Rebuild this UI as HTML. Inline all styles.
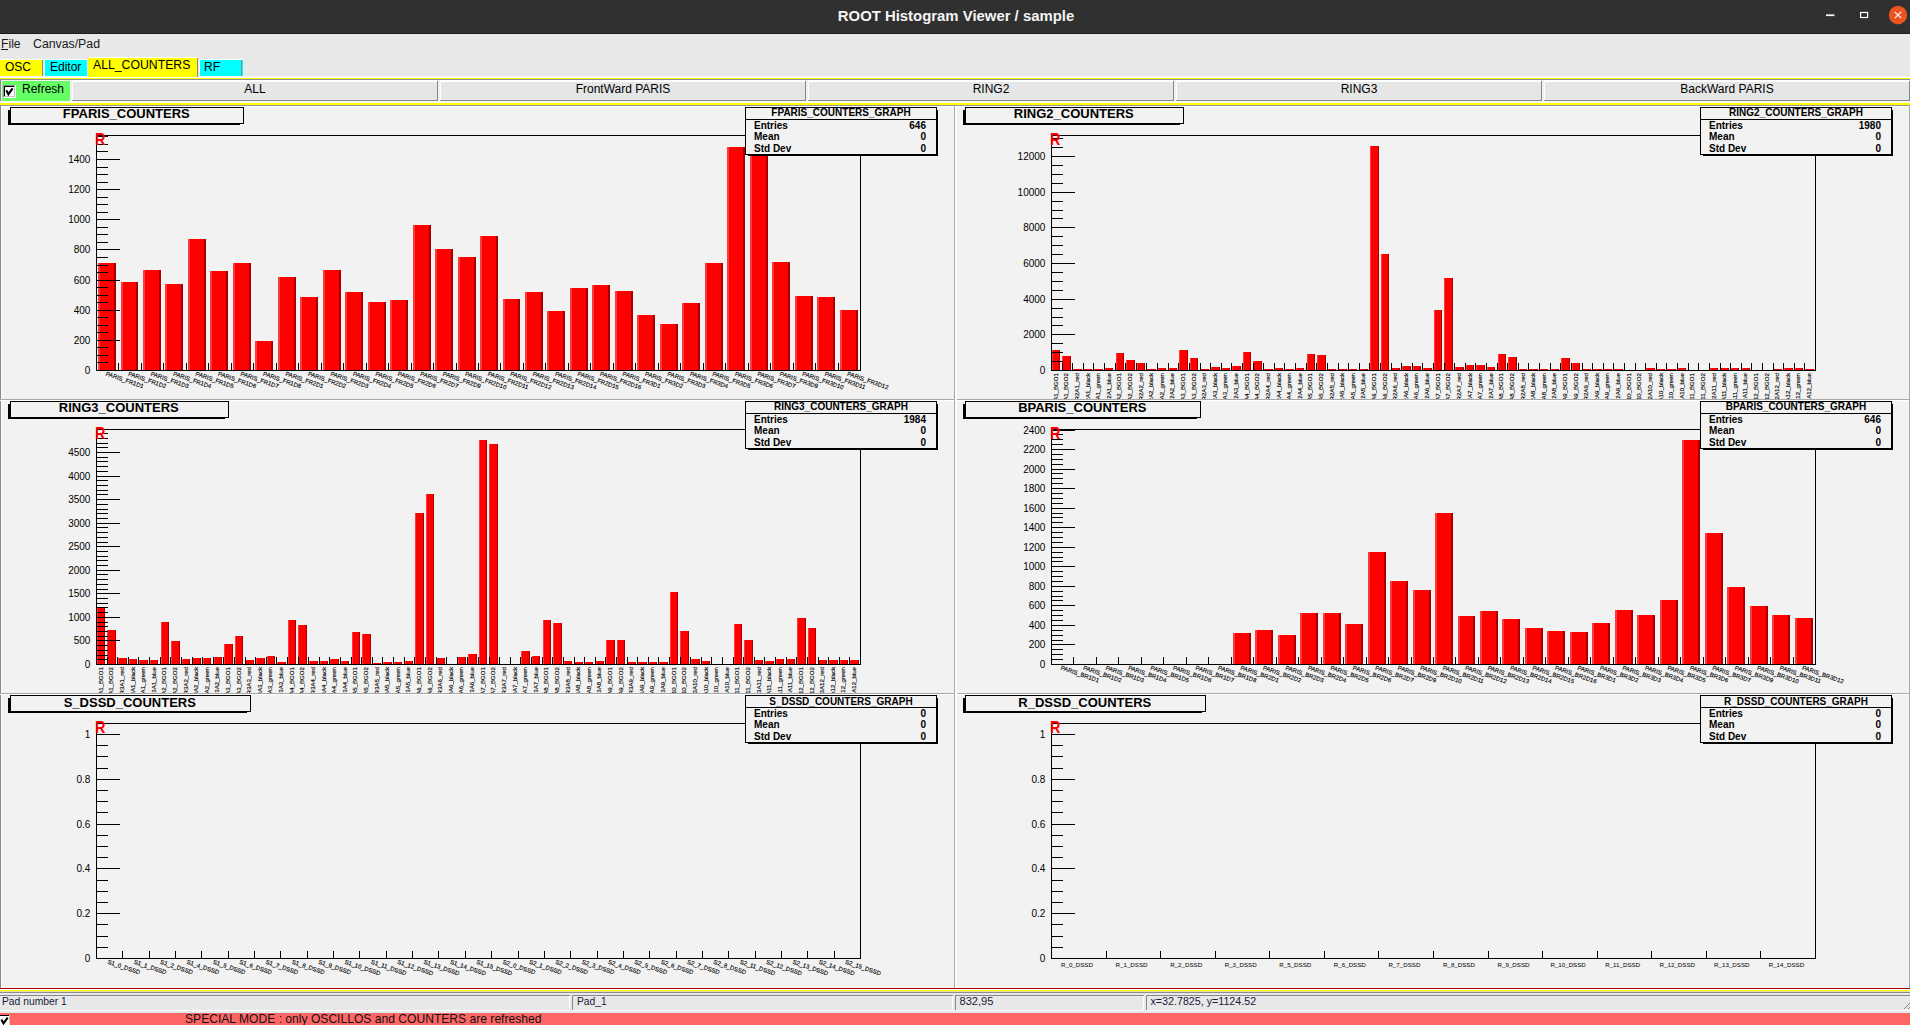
<!DOCTYPE html>
<html><head><meta charset="utf-8"><title>ROOT Histogram Viewer / sample</title>
<style>html,body{margin:0;padding:0;width:1910px;height:1025px;overflow:hidden;background:#e8e8e8}
svg{display:block} text{font-family:'Liberation Sans', sans-serif;white-space:pre}</style></head>
<body><svg width="1910" height="1025" viewBox="0 0 1910 1025" shape-rendering="crispEdges">
<rect x="0" y="0" width="1910" height="1025" fill="#e8e8e8"/>
<rect x="0" y="0" width="1910" height="33" fill="#303030"/>
<rect x="0" y="33" width="1910" height="1" fill="#1e1e1e"/>
<text x="956" y="21" font-size="14.9" font-weight="bold" fill="#f4f4f4" text-anchor="middle">ROOT Histogram Viewer / sample</text>
<rect x="1826" y="14.4" width="8.4" height="1.7" fill="#ffffff" shape-rendering="geometricPrecision"/>
<rect x="1860.6" y="12.5" width="7" height="5" fill="none" stroke="#ffffff" stroke-width="1.2" shape-rendering="geometricPrecision"/>
<circle cx="1898" cy="15" r="9.2" fill="#e95420" shape-rendering="geometricPrecision"/>
<path d="M1894.8 11.8 L1901.2 18.2 M1901.2 11.8 L1894.8 18.2" stroke="#ffffff" stroke-width="1.1" shape-rendering="geometricPrecision"/>
<text x="1" y="47.6" font-size="12.2" font-weight="normal" fill="#1a1a1a" text-anchor="start">File</text>
<rect x="1" y="49" width="7" height="1" fill="#1a1a1a"/>
<text x="33" y="47.6" font-size="12.3" font-weight="normal" fill="#1a1a1a" text-anchor="start">Canvas/Pad</text>
<rect x="0" y="59" width="43" height="1" fill="#ffffff"/>
<rect x="0" y="60" width="43" height="16" fill="#ffff00"/>
<rect x="42" y="60" width="1" height="16" fill="#8a8a8a"/>
<rect x="44" y="59" width="43" height="1" fill="#ffffff"/>
<rect x="44" y="59" width="1" height="17" fill="#ffffff"/>
<rect x="45" y="60" width="42" height="16" fill="#00ffff"/>
<rect x="88" y="57" width="110" height="1" fill="#ffffff"/>
<rect x="88" y="58" width="110" height="19" fill="#ffff00"/>
<rect x="197" y="58" width="1" height="20" fill="#8a8a8a"/>
<rect x="199" y="59" width="44" height="1" fill="#ffffff"/>
<rect x="199" y="59" width="1" height="17" fill="#ffffff"/>
<rect x="200" y="60" width="43" height="16" fill="#00ffff"/>
<rect x="241" y="60" width="1" height="16" fill="#8a8a8a"/>
<text x="5" y="70.6" font-size="12" font-weight="normal" fill="#000" text-anchor="start">OSC</text>
<text x="50" y="70.6" font-size="12" font-weight="normal" fill="#000" text-anchor="start">Editor</text>
<text x="93" y="68.6" font-size="12.25" font-weight="normal" fill="#000" text-anchor="start">ALL_COUNTERS</text>
<text x="204" y="70.6" font-size="12" font-weight="normal" fill="#000" text-anchor="start">RF</text>
<rect x="0" y="76" width="88" height="1" fill="#f6f4f8"/>
<rect x="198" y="76" width="1712" height="1" fill="#f6f4f8"/>
<rect x="0" y="77" width="1910" height="1" fill="#ffffff"/>
<rect x="0" y="78" width="1910" height="1" fill="#ffff00"/>
<rect x="0" y="79" width="1910" height="1" fill="#8c8c96"/>
<rect x="0" y="80" width="1910" height="23" fill="#f0f0f0"/>
<rect x="0" y="80" width="1" height="25" fill="#8a8a8a"/>
<rect x="2" y="81" width="68" height="20" fill="#66ff66"/>
<rect x="3" y="85" width="13" height="13" fill="#ffffff"/>
<rect x="3" y="85" width="12" height="1" fill="#8a8a8a"/>
<rect x="3" y="85" width="1" height="12" fill="#8a8a8a"/>
<rect x="4" y="86" width="10" height="1" fill="#000"/>
<rect x="4" y="86" width="1" height="10" fill="#000"/>
<rect x="4" y="96" width="11" height="1" fill="#c0c0c0"/>
<rect x="14" y="86" width="1" height="11" fill="#c0c0c0"/>
<path d="M6.3 90.3 L8.4 94.2 L12.6 88.4" fill="none" stroke="#000" stroke-width="2.1" stroke-linejoin="miter" shape-rendering="geometricPrecision"/>
<text x="22" y="92.8" font-size="12" font-weight="normal" fill="#000" text-anchor="start">Refresh</text>
<rect x="72" y="80" width="366" height="21" fill="#ffffff"/>
<rect x="73" y="82" width="365" height="18" fill="#e6e6e6"/>
<rect x="72" y="100" width="366" height="1" fill="#888888"/>
<rect x="437" y="81" width="1" height="20" fill="#888888"/>
<text x="255" y="92.8" font-size="12" font-weight="normal" fill="#000" text-anchor="middle">ALL</text>
<rect x="440" y="80" width="366" height="21" fill="#ffffff"/>
<rect x="441" y="82" width="365" height="18" fill="#e6e6e6"/>
<rect x="440" y="100" width="366" height="1" fill="#888888"/>
<rect x="805" y="81" width="1" height="20" fill="#888888"/>
<text x="623" y="92.8" font-size="12" font-weight="normal" fill="#000" text-anchor="middle">FrontWard PARIS</text>
<rect x="808" y="80" width="366" height="21" fill="#ffffff"/>
<rect x="809" y="82" width="365" height="18" fill="#e6e6e6"/>
<rect x="808" y="100" width="366" height="1" fill="#888888"/>
<rect x="1173" y="81" width="1" height="20" fill="#888888"/>
<text x="991" y="92.8" font-size="12" font-weight="normal" fill="#000" text-anchor="middle">RING2</text>
<rect x="1176" y="80" width="366" height="21" fill="#ffffff"/>
<rect x="1177" y="82" width="365" height="18" fill="#e6e6e6"/>
<rect x="1176" y="100" width="366" height="1" fill="#888888"/>
<rect x="1541" y="81" width="1" height="20" fill="#888888"/>
<text x="1359" y="92.8" font-size="12" font-weight="normal" fill="#000" text-anchor="middle">RING3</text>
<rect x="1544" y="80" width="366" height="21" fill="#ffffff"/>
<rect x="1545" y="82" width="365" height="18" fill="#e6e6e6"/>
<rect x="1544" y="100" width="366" height="1" fill="#888888"/>
<rect x="1909" y="81" width="1" height="20" fill="#888888"/>
<text x="1727" y="92.8" font-size="12" font-weight="normal" fill="#000" text-anchor="middle">BackWard PARIS</text>
<rect x="0" y="101" width="1910" height="2" fill="#f8f8f8"/>
<rect x="0" y="103" width="1910" height="2" fill="#ffff00"/>
<rect x="0" y="105" width="1910" height="1" fill="#9494a4"/>
<rect x="0" y="106" width="1910" height="883" fill="#f2f2f2"/>
<rect x="0" y="106" width="1" height="883" fill="#888888"/>
<rect x="1" y="106" width="1" height="882" fill="#ffffff"/>
<rect x="1" y="106" width="1909" height="1" fill="#ffffff"/>
<rect x="0" y="399" width="1910" height="1" fill="#a8a8a8"/>
<rect x="0" y="400" width="1910" height="1" fill="#ffffff"/>
<rect x="0" y="693" width="1910" height="1" fill="#a8a8a8"/>
<rect x="0" y="694" width="1910" height="1" fill="#ffffff"/>
<rect x="954" y="106" width="1" height="883" fill="#a8a8a8"/>
<rect x="955" y="106" width="1" height="883" fill="#ffffff"/>
<rect x="956" y="106" width="1" height="883" fill="#ffffff"/>
<rect x="1909" y="106" width="1" height="883" fill="#a8a8a8"/>
<rect x="0" y="988" width="1910" height="1" fill="#aa0000"/>
<rect x="0" y="989" width="1910" height="1" fill="#ffffff"/>
<rect x="0" y="990" width="1910" height="1" fill="#ffff00"/>
<rect x="0" y="991" width="1910" height="1" fill="#e0e0a0"/>
<rect x="0" y="992" width="1910" height="1" fill="#8c8c96"/>
<rect x="0" y="993" width="1910" height="20" fill="#e8e8e8"/>
<rect x="0" y="995" width="570" height="1" fill="#888888"/>
<rect x="0" y="1010" width="570" height="1" fill="#ffffff"/>
<rect x="569" y="996" width="1" height="15" fill="#ffffff"/>
<rect x="572" y="995" width="381" height="1" fill="#888888"/>
<rect x="572" y="995" width="1" height="15" fill="#888888"/>
<rect x="572" y="1010" width="381" height="1" fill="#ffffff"/>
<rect x="952" y="996" width="1" height="15" fill="#ffffff"/>
<rect x="955" y="995" width="189" height="1" fill="#888888"/>
<rect x="955" y="995" width="1" height="15" fill="#888888"/>
<rect x="955" y="1010" width="189" height="1" fill="#ffffff"/>
<rect x="1143" y="996" width="1" height="15" fill="#ffffff"/>
<rect x="1146" y="995" width="770" height="1" fill="#888888"/>
<rect x="1146" y="995" width="1" height="15" fill="#888888"/>
<rect x="1146" y="1010" width="770" height="1" fill="#ffffff"/>
<rect x="1915" y="996" width="1" height="15" fill="#ffffff"/>
<rect x="0" y="1011" width="1910" height="2" fill="#e4eaea"/>
<text x="2" y="1005" font-size="10.3" font-weight="normal" fill="#1a1a3a" text-anchor="start">Pad number 1</text>
<text x="577" y="1005" font-size="10.3" font-weight="normal" fill="#1a1a3a" text-anchor="start">Pad_1</text>
<text x="959.5" y="1005" font-size="11.1" font-weight="normal" fill="#1a1a3a" text-anchor="start">832,95</text>
<text x="1150.5" y="1005" font-size="10.7" font-weight="normal" fill="#1a1a3a" text-anchor="start">x=32.7825, y=1124.52</text>
<path d="M1904 1009 L1910 1003 M1908 1009 L1910 1007" stroke="#808080" stroke-width="1"/>
<rect x="0" y="1013" width="1910" height="12" fill="#ff6666"/>
<rect x="0" y="1015" width="10" height="10" fill="#ffffff"/>
<rect x="0" y="1015" width="9" height="1" fill="#000"/>
<rect x="9" y="1015" width="1" height="11" fill="#c0c0c0"/>
<path d="M1.4 1019.6 L3.5 1023.4 L7.7 1017.6" fill="none" stroke="#000" stroke-width="2.1" shape-rendering="geometricPrecision"/>
<text x="185" y="1023" font-size="12.1" font-weight="normal" fill="#111" text-anchor="start">SPECIAL MODE : only OSCILLOS and COUNTERS are refreshed</text>
<defs>
<clipPath id="pc0"><rect x="2" y="106" width="952" height="293"/></clipPath>
<clipPath id="pc1"><rect x="957" y="106" width="952" height="293"/></clipPath>
<clipPath id="pc2"><rect x="2" y="400" width="952" height="293"/></clipPath>
<clipPath id="pc3"><rect x="957" y="400" width="952" height="293"/></clipPath>
<clipPath id="pc4"><rect x="2" y="694" width="952" height="293"/></clipPath>
<clipPath id="pc5"><rect x="957" y="694" width="952" height="293"/></clipPath>
</defs>
<g clip-path="url(#pc0)">
<rect x="98" y="263" width="18" height="107" fill="#ff0000"/>
<rect x="98" y="263" width="2" height="107" fill="#ff3a3a"/>
<rect x="114" y="263" width="2" height="107" fill="#a80000"/>
<rect x="121" y="282" width="17" height="88" fill="#ff0000"/>
<rect x="121" y="282" width="2" height="88" fill="#ff3a3a"/>
<rect x="136" y="282" width="2" height="88" fill="#a80000"/>
<rect x="143" y="270" width="18" height="100" fill="#ff0000"/>
<rect x="143" y="270" width="2" height="100" fill="#ff3a3a"/>
<rect x="159" y="270" width="2" height="100" fill="#a80000"/>
<rect x="165" y="284" width="18" height="86" fill="#ff0000"/>
<rect x="165" y="284" width="2" height="86" fill="#ff3a3a"/>
<rect x="181" y="284" width="2" height="86" fill="#a80000"/>
<rect x="188" y="239" width="18" height="131" fill="#ff0000"/>
<rect x="188" y="239" width="2" height="131" fill="#ff3a3a"/>
<rect x="204" y="239" width="2" height="131" fill="#a80000"/>
<rect x="210" y="271" width="18" height="99" fill="#ff0000"/>
<rect x="210" y="271" width="2" height="99" fill="#ff3a3a"/>
<rect x="226" y="271" width="2" height="99" fill="#a80000"/>
<rect x="233" y="263" width="18" height="107" fill="#ff0000"/>
<rect x="233" y="263" width="2" height="107" fill="#ff3a3a"/>
<rect x="249" y="263" width="2" height="107" fill="#a80000"/>
<rect x="255" y="341" width="18" height="29" fill="#ff0000"/>
<rect x="255" y="341" width="2" height="29" fill="#ff3a3a"/>
<rect x="271" y="341" width="2" height="29" fill="#a80000"/>
<rect x="278" y="277" width="18" height="93" fill="#ff0000"/>
<rect x="278" y="277" width="2" height="93" fill="#ff3a3a"/>
<rect x="294" y="277" width="2" height="93" fill="#a80000"/>
<rect x="300" y="297" width="18" height="73" fill="#ff0000"/>
<rect x="300" y="297" width="2" height="73" fill="#ff3a3a"/>
<rect x="316" y="297" width="2" height="73" fill="#a80000"/>
<rect x="323" y="270" width="18" height="100" fill="#ff0000"/>
<rect x="323" y="270" width="2" height="100" fill="#ff3a3a"/>
<rect x="339" y="270" width="2" height="100" fill="#a80000"/>
<rect x="345" y="292" width="18" height="78" fill="#ff0000"/>
<rect x="345" y="292" width="2" height="78" fill="#ff3a3a"/>
<rect x="361" y="292" width="2" height="78" fill="#a80000"/>
<rect x="368" y="302" width="18" height="68" fill="#ff0000"/>
<rect x="368" y="302" width="2" height="68" fill="#ff3a3a"/>
<rect x="384" y="302" width="2" height="68" fill="#a80000"/>
<rect x="390" y="300" width="18" height="70" fill="#ff0000"/>
<rect x="390" y="300" width="2" height="70" fill="#ff3a3a"/>
<rect x="406" y="300" width="2" height="70" fill="#a80000"/>
<rect x="413" y="225" width="18" height="145" fill="#ff0000"/>
<rect x="413" y="225" width="2" height="145" fill="#ff3a3a"/>
<rect x="429" y="225" width="2" height="145" fill="#a80000"/>
<rect x="435" y="249" width="18" height="121" fill="#ff0000"/>
<rect x="435" y="249" width="2" height="121" fill="#ff3a3a"/>
<rect x="451" y="249" width="2" height="121" fill="#a80000"/>
<rect x="458" y="257" width="18" height="113" fill="#ff0000"/>
<rect x="458" y="257" width="2" height="113" fill="#ff3a3a"/>
<rect x="474" y="257" width="2" height="113" fill="#a80000"/>
<rect x="480" y="236" width="18" height="134" fill="#ff0000"/>
<rect x="480" y="236" width="2" height="134" fill="#ff3a3a"/>
<rect x="496" y="236" width="2" height="134" fill="#a80000"/>
<rect x="503" y="299" width="17" height="71" fill="#ff0000"/>
<rect x="503" y="299" width="2" height="71" fill="#ff3a3a"/>
<rect x="518" y="299" width="2" height="71" fill="#a80000"/>
<rect x="525" y="292" width="18" height="78" fill="#ff0000"/>
<rect x="525" y="292" width="2" height="78" fill="#ff3a3a"/>
<rect x="541" y="292" width="2" height="78" fill="#a80000"/>
<rect x="547" y="311" width="18" height="59" fill="#ff0000"/>
<rect x="547" y="311" width="2" height="59" fill="#ff3a3a"/>
<rect x="563" y="311" width="2" height="59" fill="#a80000"/>
<rect x="570" y="288" width="18" height="82" fill="#ff0000"/>
<rect x="570" y="288" width="2" height="82" fill="#ff3a3a"/>
<rect x="586" y="288" width="2" height="82" fill="#a80000"/>
<rect x="592" y="285" width="18" height="85" fill="#ff0000"/>
<rect x="592" y="285" width="2" height="85" fill="#ff3a3a"/>
<rect x="608" y="285" width="2" height="85" fill="#a80000"/>
<rect x="615" y="291" width="18" height="79" fill="#ff0000"/>
<rect x="615" y="291" width="2" height="79" fill="#ff3a3a"/>
<rect x="631" y="291" width="2" height="79" fill="#a80000"/>
<rect x="637" y="315" width="18" height="55" fill="#ff0000"/>
<rect x="637" y="315" width="2" height="55" fill="#ff3a3a"/>
<rect x="653" y="315" width="2" height="55" fill="#a80000"/>
<rect x="660" y="324" width="18" height="46" fill="#ff0000"/>
<rect x="660" y="324" width="2" height="46" fill="#ff3a3a"/>
<rect x="676" y="324" width="2" height="46" fill="#a80000"/>
<rect x="682" y="303" width="18" height="67" fill="#ff0000"/>
<rect x="682" y="303" width="2" height="67" fill="#ff3a3a"/>
<rect x="698" y="303" width="2" height="67" fill="#a80000"/>
<rect x="705" y="263" width="18" height="107" fill="#ff0000"/>
<rect x="705" y="263" width="2" height="107" fill="#ff3a3a"/>
<rect x="721" y="263" width="2" height="107" fill="#a80000"/>
<rect x="727" y="147" width="18" height="223" fill="#ff0000"/>
<rect x="727" y="147" width="2" height="223" fill="#ff3a3a"/>
<rect x="743" y="147" width="2" height="223" fill="#a80000"/>
<rect x="750" y="147" width="18" height="223" fill="#ff0000"/>
<rect x="750" y="147" width="2" height="223" fill="#ff3a3a"/>
<rect x="766" y="147" width="2" height="223" fill="#a80000"/>
<rect x="772" y="262" width="18" height="108" fill="#ff0000"/>
<rect x="772" y="262" width="2" height="108" fill="#ff3a3a"/>
<rect x="788" y="262" width="2" height="108" fill="#a80000"/>
<rect x="795" y="296" width="18" height="74" fill="#ff0000"/>
<rect x="795" y="296" width="2" height="74" fill="#ff3a3a"/>
<rect x="811" y="296" width="2" height="74" fill="#a80000"/>
<rect x="817" y="297" width="18" height="73" fill="#ff0000"/>
<rect x="817" y="297" width="2" height="73" fill="#ff3a3a"/>
<rect x="833" y="297" width="2" height="73" fill="#a80000"/>
<rect x="840" y="310" width="18" height="60" fill="#ff0000"/>
<rect x="840" y="310" width="2" height="60" fill="#ff3a3a"/>
<rect x="856" y="310" width="2" height="60" fill="#a80000"/>
<rect x="96" y="135" width="765" height="1" fill="#000"/>
<rect x="96" y="370" width="765" height="1" fill="#000"/>
<rect x="96" y="135" width="1" height="236" fill="#000"/>
<rect x="860" y="135" width="1" height="236" fill="#000"/>
<rect x="96" y="370" width="24" height="1" fill="#000"/>
<text x="90.4" y="373.5" font-size="10" font-weight="normal" fill="#000" text-anchor="end">0</text>
<rect x="96" y="362" width="12" height="1" fill="#000"/>
<rect x="96" y="355" width="12" height="1" fill="#000"/>
<rect x="96" y="347" width="12" height="1" fill="#000"/>
<rect x="96" y="340" width="24" height="1" fill="#000"/>
<text x="90.4" y="343.5" font-size="10" font-weight="normal" fill="#000" text-anchor="end">200</text>
<rect x="96" y="332" width="12" height="1" fill="#000"/>
<rect x="96" y="325" width="12" height="1" fill="#000"/>
<rect x="96" y="317" width="12" height="1" fill="#000"/>
<rect x="96" y="310" width="24" height="1" fill="#000"/>
<text x="90.4" y="313.5" font-size="10" font-weight="normal" fill="#000" text-anchor="end">400</text>
<rect x="96" y="302" width="12" height="1" fill="#000"/>
<rect x="96" y="295" width="12" height="1" fill="#000"/>
<rect x="96" y="287" width="12" height="1" fill="#000"/>
<rect x="96" y="280" width="24" height="1" fill="#000"/>
<text x="90.4" y="283.5" font-size="10" font-weight="normal" fill="#000" text-anchor="end">600</text>
<rect x="96" y="272" width="12" height="1" fill="#000"/>
<rect x="96" y="265" width="12" height="1" fill="#000"/>
<rect x="96" y="257" width="12" height="1" fill="#000"/>
<rect x="96" y="249" width="24" height="1" fill="#000"/>
<text x="90.4" y="252.5" font-size="10" font-weight="normal" fill="#000" text-anchor="end">800</text>
<rect x="96" y="242" width="12" height="1" fill="#000"/>
<rect x="96" y="234" width="12" height="1" fill="#000"/>
<rect x="96" y="227" width="12" height="1" fill="#000"/>
<rect x="96" y="219" width="24" height="1" fill="#000"/>
<text x="90.4" y="222.5" font-size="10" font-weight="normal" fill="#000" text-anchor="end">1000</text>
<rect x="96" y="212" width="12" height="1" fill="#000"/>
<rect x="96" y="204" width="12" height="1" fill="#000"/>
<rect x="96" y="197" width="12" height="1" fill="#000"/>
<rect x="96" y="189" width="24" height="1" fill="#000"/>
<text x="90.4" y="192.5" font-size="10" font-weight="normal" fill="#000" text-anchor="end">1200</text>
<rect x="96" y="182" width="12" height="1" fill="#000"/>
<rect x="96" y="174" width="12" height="1" fill="#000"/>
<rect x="96" y="167" width="12" height="1" fill="#000"/>
<rect x="96" y="159" width="24" height="1" fill="#000"/>
<text x="90.4" y="162.5" font-size="10" font-weight="normal" fill="#000" text-anchor="end">1400</text>
<rect x="96" y="151" width="12" height="1" fill="#000"/>
<rect x="96" y="144" width="12" height="1" fill="#000"/>
<rect x="96" y="136" width="12" height="1" fill="#000"/>
<rect x="118" y="363" width="1" height="8" fill="#000"/>
<rect x="141" y="363" width="1" height="8" fill="#000"/>
<rect x="163" y="363" width="1" height="8" fill="#000"/>
<rect x="186" y="363" width="1" height="8" fill="#000"/>
<rect x="208" y="363" width="1" height="8" fill="#000"/>
<rect x="231" y="363" width="1" height="8" fill="#000"/>
<rect x="253" y="363" width="1" height="8" fill="#000"/>
<rect x="276" y="363" width="1" height="8" fill="#000"/>
<rect x="298" y="363" width="1" height="8" fill="#000"/>
<rect x="321" y="363" width="1" height="8" fill="#000"/>
<rect x="343" y="363" width="1" height="8" fill="#000"/>
<rect x="366" y="363" width="1" height="8" fill="#000"/>
<rect x="388" y="363" width="1" height="8" fill="#000"/>
<rect x="411" y="363" width="1" height="8" fill="#000"/>
<rect x="433" y="363" width="1" height="8" fill="#000"/>
<rect x="456" y="363" width="1" height="8" fill="#000"/>
<rect x="478" y="363" width="1" height="8" fill="#000"/>
<rect x="500" y="363" width="1" height="8" fill="#000"/>
<rect x="523" y="363" width="1" height="8" fill="#000"/>
<rect x="545" y="363" width="1" height="8" fill="#000"/>
<rect x="568" y="363" width="1" height="8" fill="#000"/>
<rect x="590" y="363" width="1" height="8" fill="#000"/>
<rect x="613" y="363" width="1" height="8" fill="#000"/>
<rect x="635" y="363" width="1" height="8" fill="#000"/>
<rect x="658" y="363" width="1" height="8" fill="#000"/>
<rect x="680" y="363" width="1" height="8" fill="#000"/>
<rect x="703" y="363" width="1" height="8" fill="#000"/>
<rect x="725" y="363" width="1" height="8" fill="#000"/>
<rect x="748" y="363" width="1" height="8" fill="#000"/>
<rect x="770" y="363" width="1" height="8" fill="#000"/>
<rect x="793" y="363" width="1" height="8" fill="#000"/>
<rect x="815" y="363" width="1" height="8" fill="#000"/>
<rect x="838" y="363" width="1" height="8" fill="#000"/>
<text transform="translate(105.24,375.40) rotate(19)" font-size="6" fill="#000" stroke="#000" stroke-width="0.12">PARIS_FR1D1</text>
<text transform="translate(127.71,375.40) rotate(19)" font-size="6" fill="#000" stroke="#000" stroke-width="0.12">PARIS_FR1D2</text>
<text transform="translate(150.18,375.40) rotate(19)" font-size="6" fill="#000" stroke="#000" stroke-width="0.12">PARIS_FR1D3</text>
<text transform="translate(172.65,375.40) rotate(19)" font-size="6" fill="#000" stroke="#000" stroke-width="0.12">PARIS_FR1D4</text>
<text transform="translate(195.12,375.40) rotate(19)" font-size="6" fill="#000" stroke="#000" stroke-width="0.12">PARIS_FR1D5</text>
<text transform="translate(217.59,375.40) rotate(19)" font-size="6" fill="#000" stroke="#000" stroke-width="0.12">PARIS_FR1D6</text>
<text transform="translate(240.06,375.40) rotate(19)" font-size="6" fill="#000" stroke="#000" stroke-width="0.12">PARIS_FR1D7</text>
<text transform="translate(262.53,375.40) rotate(19)" font-size="6" fill="#000" stroke="#000" stroke-width="0.12">PARIS_FR1D8</text>
<text transform="translate(285.00,375.40) rotate(19)" font-size="6" fill="#000" stroke="#000" stroke-width="0.12">PARIS_FR2D1</text>
<text transform="translate(307.47,375.40) rotate(19)" font-size="6" fill="#000" stroke="#000" stroke-width="0.12">PARIS_FR2D2</text>
<text transform="translate(329.94,375.40) rotate(19)" font-size="6" fill="#000" stroke="#000" stroke-width="0.12">PARIS_FR2D3</text>
<text transform="translate(352.41,375.40) rotate(19)" font-size="6" fill="#000" stroke="#000" stroke-width="0.12">PARIS_FR2D4</text>
<text transform="translate(374.88,375.40) rotate(19)" font-size="6" fill="#000" stroke="#000" stroke-width="0.12">PARIS_FR2D5</text>
<text transform="translate(397.35,375.40) rotate(19)" font-size="6" fill="#000" stroke="#000" stroke-width="0.12">PARIS_FR2D6</text>
<text transform="translate(419.82,375.40) rotate(19)" font-size="6" fill="#000" stroke="#000" stroke-width="0.12">PARIS_FR2D7</text>
<text transform="translate(442.29,375.40) rotate(19)" font-size="6" fill="#000" stroke="#000" stroke-width="0.12">PARIS_FR2D9</text>
<text transform="translate(464.76,375.40) rotate(19)" font-size="6" fill="#000" stroke="#000" stroke-width="0.12">PARIS_FR2D10</text>
<text transform="translate(487.24,375.40) rotate(19)" font-size="6" fill="#000" stroke="#000" stroke-width="0.12">PARIS_FR2D11</text>
<text transform="translate(509.71,375.40) rotate(19)" font-size="6" fill="#000" stroke="#000" stroke-width="0.12">PARIS_FR2D12</text>
<text transform="translate(532.18,375.40) rotate(19)" font-size="6" fill="#000" stroke="#000" stroke-width="0.12">PARIS_FR2D13</text>
<text transform="translate(554.65,375.40) rotate(19)" font-size="6" fill="#000" stroke="#000" stroke-width="0.12">PARIS_FR2D14</text>
<text transform="translate(577.12,375.40) rotate(19)" font-size="6" fill="#000" stroke="#000" stroke-width="0.12">PARIS_FR2D15</text>
<text transform="translate(599.59,375.40) rotate(19)" font-size="6" fill="#000" stroke="#000" stroke-width="0.12">PARIS_FR2D16</text>
<text transform="translate(622.06,375.40) rotate(19)" font-size="6" fill="#000" stroke="#000" stroke-width="0.12">PARIS_FR3D1</text>
<text transform="translate(644.53,375.40) rotate(19)" font-size="6" fill="#000" stroke="#000" stroke-width="0.12">PARIS_FR3D2</text>
<text transform="translate(667.00,375.40) rotate(19)" font-size="6" fill="#000" stroke="#000" stroke-width="0.12">PARIS_FR3D3</text>
<text transform="translate(689.47,375.40) rotate(19)" font-size="6" fill="#000" stroke="#000" stroke-width="0.12">PARIS_FR3D4</text>
<text transform="translate(711.94,375.40) rotate(19)" font-size="6" fill="#000" stroke="#000" stroke-width="0.12">PARIS_FR3D5</text>
<text transform="translate(734.41,375.40) rotate(19)" font-size="6" fill="#000" stroke="#000" stroke-width="0.12">PARIS_FR3D6</text>
<text transform="translate(756.88,375.40) rotate(19)" font-size="6" fill="#000" stroke="#000" stroke-width="0.12">PARIS_FR3D7</text>
<text transform="translate(779.35,375.40) rotate(19)" font-size="6" fill="#000" stroke="#000" stroke-width="0.12">PARIS_FR3D9</text>
<text transform="translate(801.82,375.40) rotate(19)" font-size="6" fill="#000" stroke="#000" stroke-width="0.12">PARIS_FR3D10</text>
<text transform="translate(824.29,375.40) rotate(19)" font-size="6" fill="#000" stroke="#000" stroke-width="0.12">PARIS_FR3D11</text>
<text transform="translate(846.76,375.40) rotate(19)" font-size="6" fill="#000" stroke="#000" stroke-width="0.12">PARIS_FR3D12</text>
<text transform="translate(95.0,145.1) scale(0.9,1)" font-size="16" font-weight="bold" fill="#ff0000">R</text>
<rect x="8" y="110" width="2" height="15" fill="#000"/>
<rect x="8" y="124" width="232" height="1" fill="#000"/>
<rect x="10" y="107" width="234" height="17" fill="#f2f2f2"/>
<rect x="10" y="107" width="234" height="1" fill="#000"/>
<rect x="10" y="123" width="234" height="1" fill="#000"/>
<rect x="10" y="107" width="1" height="17" fill="#000"/>
<rect x="243" y="107" width="1" height="17" fill="#000"/>
<text x="126.3" y="118" font-size="13" font-weight="bold" fill="#000" text-anchor="middle">FPARIS_COUNTERS</text>
</g>
<rect x="745" y="107" width="192" height="48" fill="#f2f2f2"/>
<rect x="937" y="110" width="1" height="46" fill="#000"/>
<rect x="748" y="155" width="190" height="1" fill="#000"/>
<rect x="745" y="107" width="192" height="1" fill="#000"/>
<rect x="745" y="154" width="192" height="1" fill="#000"/>
<rect x="745" y="107" width="1" height="48" fill="#000"/>
<rect x="936" y="107" width="1" height="48" fill="#000"/>
<rect x="745" y="119" width="192" height="1" fill="#000"/>
<text x="841" y="116.2" font-size="10" font-weight="bold" fill="#000" text-anchor="middle">FPARIS_COUNTERS_GRAPH</text>
<text x="754" y="128.6" font-size="10" font-weight="bold" fill="#000" text-anchor="start">Entries</text>
<text x="926" y="128.6" font-size="10" font-weight="bold" fill="#000" text-anchor="end">646</text>
<text x="754" y="140.1" font-size="10" font-weight="bold" fill="#000" text-anchor="start">Mean</text>
<text x="926" y="140.1" font-size="10" font-weight="bold" fill="#000" text-anchor="end">0</text>
<text x="754" y="151.6" font-size="10" font-weight="bold" fill="#000" text-anchor="start">Std Dev</text>
<text x="926" y="151.6" font-size="10" font-weight="bold" fill="#000" text-anchor="end">0</text>
<g clip-path="url(#pc1)">
<rect x="1052" y="350" width="8" height="20" fill="#ff0000"/>
<rect x="1052" y="350" width="1" height="20" fill="#ff3a3a"/>
<rect x="1059" y="350" width="1" height="20" fill="#a80000"/>
<rect x="1062" y="356" width="9" height="14" fill="#ff0000"/>
<rect x="1062" y="356" width="1" height="14" fill="#ff3a3a"/>
<rect x="1070" y="356" width="1" height="14" fill="#a80000"/>
<rect x="1073" y="369" width="9" height="1" fill="#ff0000"/>
<rect x="1073" y="369" width="1" height="1" fill="#ff3a3a"/>
<rect x="1081" y="369" width="1" height="1" fill="#a80000"/>
<rect x="1084" y="369" width="8" height="1" fill="#ff0000"/>
<rect x="1084" y="369" width="1" height="1" fill="#ff3a3a"/>
<rect x="1091" y="369" width="1" height="1" fill="#a80000"/>
<rect x="1094" y="369" width="9" height="1" fill="#ff0000"/>
<rect x="1094" y="369" width="1" height="1" fill="#ff3a3a"/>
<rect x="1102" y="369" width="1" height="1" fill="#a80000"/>
<rect x="1105" y="368" width="8" height="2" fill="#ff0000"/>
<rect x="1105" y="368" width="1" height="2" fill="#ff3a3a"/>
<rect x="1112" y="368" width="1" height="2" fill="#a80000"/>
<rect x="1116" y="353" width="8" height="17" fill="#ff0000"/>
<rect x="1116" y="353" width="1" height="17" fill="#ff3a3a"/>
<rect x="1123" y="353" width="1" height="17" fill="#a80000"/>
<rect x="1126" y="360" width="9" height="10" fill="#ff0000"/>
<rect x="1126" y="360" width="1" height="10" fill="#ff3a3a"/>
<rect x="1134" y="360" width="1" height="10" fill="#a80000"/>
<rect x="1137" y="363" width="8" height="7" fill="#ff0000"/>
<rect x="1137" y="363" width="1" height="7" fill="#ff3a3a"/>
<rect x="1144" y="363" width="1" height="7" fill="#a80000"/>
<rect x="1147" y="369" width="9" height="1" fill="#ff0000"/>
<rect x="1147" y="369" width="1" height="1" fill="#ff3a3a"/>
<rect x="1155" y="369" width="1" height="1" fill="#a80000"/>
<rect x="1158" y="368" width="8" height="2" fill="#ff0000"/>
<rect x="1158" y="368" width="1" height="2" fill="#ff3a3a"/>
<rect x="1165" y="368" width="1" height="2" fill="#a80000"/>
<rect x="1169" y="368" width="8" height="2" fill="#ff0000"/>
<rect x="1169" y="368" width="1" height="2" fill="#ff3a3a"/>
<rect x="1176" y="368" width="1" height="2" fill="#a80000"/>
<rect x="1179" y="350" width="9" height="20" fill="#ff0000"/>
<rect x="1179" y="350" width="1" height="20" fill="#ff3a3a"/>
<rect x="1187" y="350" width="1" height="20" fill="#a80000"/>
<rect x="1190" y="358" width="8" height="12" fill="#ff0000"/>
<rect x="1190" y="358" width="1" height="12" fill="#ff3a3a"/>
<rect x="1197" y="358" width="1" height="12" fill="#a80000"/>
<rect x="1200" y="369" width="9" height="1" fill="#ff0000"/>
<rect x="1200" y="369" width="1" height="1" fill="#ff3a3a"/>
<rect x="1208" y="369" width="1" height="1" fill="#a80000"/>
<rect x="1211" y="367" width="9" height="3" fill="#ff0000"/>
<rect x="1211" y="367" width="1" height="3" fill="#ff3a3a"/>
<rect x="1219" y="367" width="1" height="3" fill="#a80000"/>
<rect x="1222" y="368" width="8" height="2" fill="#ff0000"/>
<rect x="1222" y="368" width="1" height="2" fill="#ff3a3a"/>
<rect x="1229" y="368" width="1" height="2" fill="#a80000"/>
<rect x="1232" y="366" width="9" height="4" fill="#ff0000"/>
<rect x="1232" y="366" width="1" height="4" fill="#ff3a3a"/>
<rect x="1240" y="366" width="1" height="4" fill="#a80000"/>
<rect x="1243" y="352" width="8" height="18" fill="#ff0000"/>
<rect x="1243" y="352" width="1" height="18" fill="#ff3a3a"/>
<rect x="1250" y="352" width="1" height="18" fill="#a80000"/>
<rect x="1253" y="361" width="9" height="9" fill="#ff0000"/>
<rect x="1253" y="361" width="1" height="9" fill="#ff3a3a"/>
<rect x="1261" y="361" width="1" height="9" fill="#a80000"/>
<rect x="1264" y="369" width="9" height="1" fill="#ff0000"/>
<rect x="1264" y="369" width="1" height="1" fill="#ff3a3a"/>
<rect x="1272" y="369" width="1" height="1" fill="#a80000"/>
<rect x="1275" y="368" width="8" height="2" fill="#ff0000"/>
<rect x="1275" y="368" width="1" height="2" fill="#ff3a3a"/>
<rect x="1282" y="368" width="1" height="2" fill="#a80000"/>
<rect x="1285" y="369" width="9" height="1" fill="#ff0000"/>
<rect x="1285" y="369" width="1" height="1" fill="#ff3a3a"/>
<rect x="1293" y="369" width="1" height="1" fill="#a80000"/>
<rect x="1296" y="368" width="8" height="2" fill="#ff0000"/>
<rect x="1296" y="368" width="1" height="2" fill="#ff3a3a"/>
<rect x="1303" y="368" width="1" height="2" fill="#a80000"/>
<rect x="1307" y="354" width="8" height="16" fill="#ff0000"/>
<rect x="1307" y="354" width="1" height="16" fill="#ff3a3a"/>
<rect x="1314" y="354" width="1" height="16" fill="#a80000"/>
<rect x="1317" y="355" width="9" height="15" fill="#ff0000"/>
<rect x="1317" y="355" width="1" height="15" fill="#ff3a3a"/>
<rect x="1325" y="355" width="1" height="15" fill="#a80000"/>
<rect x="1328" y="369" width="8" height="1" fill="#ff0000"/>
<rect x="1328" y="369" width="1" height="1" fill="#ff3a3a"/>
<rect x="1335" y="369" width="1" height="1" fill="#a80000"/>
<rect x="1338" y="369" width="9" height="1" fill="#ff0000"/>
<rect x="1338" y="369" width="1" height="1" fill="#ff3a3a"/>
<rect x="1346" y="369" width="1" height="1" fill="#a80000"/>
<rect x="1349" y="369" width="8" height="1" fill="#ff0000"/>
<rect x="1349" y="369" width="1" height="1" fill="#ff3a3a"/>
<rect x="1356" y="369" width="1" height="1" fill="#a80000"/>
<rect x="1360" y="369" width="8" height="1" fill="#ff0000"/>
<rect x="1360" y="369" width="1" height="1" fill="#ff3a3a"/>
<rect x="1367" y="369" width="1" height="1" fill="#a80000"/>
<rect x="1370" y="146" width="9" height="224" fill="#ff0000"/>
<rect x="1370" y="146" width="1" height="224" fill="#ff3a3a"/>
<rect x="1378" y="146" width="1" height="224" fill="#a80000"/>
<rect x="1381" y="254" width="8" height="116" fill="#ff0000"/>
<rect x="1381" y="254" width="1" height="116" fill="#ff3a3a"/>
<rect x="1388" y="254" width="1" height="116" fill="#a80000"/>
<rect x="1391" y="368" width="9" height="2" fill="#ff0000"/>
<rect x="1391" y="368" width="1" height="2" fill="#ff3a3a"/>
<rect x="1399" y="368" width="1" height="2" fill="#a80000"/>
<rect x="1402" y="366" width="9" height="4" fill="#ff0000"/>
<rect x="1402" y="366" width="1" height="4" fill="#ff3a3a"/>
<rect x="1410" y="366" width="1" height="4" fill="#a80000"/>
<rect x="1413" y="366" width="8" height="4" fill="#ff0000"/>
<rect x="1413" y="366" width="1" height="4" fill="#ff3a3a"/>
<rect x="1420" y="366" width="1" height="4" fill="#a80000"/>
<rect x="1423" y="368" width="9" height="2" fill="#ff0000"/>
<rect x="1423" y="368" width="1" height="2" fill="#ff3a3a"/>
<rect x="1431" y="368" width="1" height="2" fill="#a80000"/>
<rect x="1434" y="310" width="8" height="60" fill="#ff0000"/>
<rect x="1434" y="310" width="1" height="60" fill="#ff3a3a"/>
<rect x="1441" y="310" width="1" height="60" fill="#a80000"/>
<rect x="1444" y="278" width="9" height="92" fill="#ff0000"/>
<rect x="1444" y="278" width="1" height="92" fill="#ff3a3a"/>
<rect x="1452" y="278" width="1" height="92" fill="#a80000"/>
<rect x="1455" y="367" width="9" height="3" fill="#ff0000"/>
<rect x="1455" y="367" width="1" height="3" fill="#ff3a3a"/>
<rect x="1463" y="367" width="1" height="3" fill="#a80000"/>
<rect x="1466" y="365" width="8" height="5" fill="#ff0000"/>
<rect x="1466" y="365" width="1" height="5" fill="#ff3a3a"/>
<rect x="1473" y="365" width="1" height="5" fill="#a80000"/>
<rect x="1476" y="365" width="9" height="5" fill="#ff0000"/>
<rect x="1476" y="365" width="1" height="5" fill="#ff3a3a"/>
<rect x="1484" y="365" width="1" height="5" fill="#a80000"/>
<rect x="1487" y="367" width="8" height="3" fill="#ff0000"/>
<rect x="1487" y="367" width="1" height="3" fill="#ff3a3a"/>
<rect x="1494" y="367" width="1" height="3" fill="#a80000"/>
<rect x="1498" y="354" width="8" height="16" fill="#ff0000"/>
<rect x="1498" y="354" width="1" height="16" fill="#ff3a3a"/>
<rect x="1505" y="354" width="1" height="16" fill="#a80000"/>
<rect x="1508" y="357" width="9" height="13" fill="#ff0000"/>
<rect x="1508" y="357" width="1" height="13" fill="#ff3a3a"/>
<rect x="1516" y="357" width="1" height="13" fill="#a80000"/>
<rect x="1519" y="369" width="8" height="1" fill="#ff0000"/>
<rect x="1519" y="369" width="1" height="1" fill="#ff3a3a"/>
<rect x="1526" y="369" width="1" height="1" fill="#a80000"/>
<rect x="1529" y="369" width="9" height="1" fill="#ff0000"/>
<rect x="1529" y="369" width="1" height="1" fill="#ff3a3a"/>
<rect x="1537" y="369" width="1" height="1" fill="#a80000"/>
<rect x="1540" y="369" width="8" height="1" fill="#ff0000"/>
<rect x="1540" y="369" width="1" height="1" fill="#ff3a3a"/>
<rect x="1547" y="369" width="1" height="1" fill="#a80000"/>
<rect x="1551" y="369" width="8" height="1" fill="#ff0000"/>
<rect x="1551" y="369" width="1" height="1" fill="#ff3a3a"/>
<rect x="1558" y="369" width="1" height="1" fill="#a80000"/>
<rect x="1561" y="358" width="9" height="12" fill="#ff0000"/>
<rect x="1561" y="358" width="1" height="12" fill="#ff3a3a"/>
<rect x="1569" y="358" width="1" height="12" fill="#a80000"/>
<rect x="1572" y="363" width="8" height="7" fill="#ff0000"/>
<rect x="1572" y="363" width="1" height="7" fill="#ff3a3a"/>
<rect x="1579" y="363" width="1" height="7" fill="#a80000"/>
<rect x="1582" y="369" width="9" height="1" fill="#ff0000"/>
<rect x="1582" y="369" width="1" height="1" fill="#ff3a3a"/>
<rect x="1590" y="369" width="1" height="1" fill="#a80000"/>
<rect x="1593" y="369" width="9" height="1" fill="#ff0000"/>
<rect x="1593" y="369" width="1" height="1" fill="#ff3a3a"/>
<rect x="1601" y="369" width="1" height="1" fill="#a80000"/>
<rect x="1604" y="369" width="8" height="1" fill="#ff0000"/>
<rect x="1604" y="369" width="1" height="1" fill="#ff3a3a"/>
<rect x="1611" y="369" width="1" height="1" fill="#a80000"/>
<rect x="1614" y="369" width="9" height="1" fill="#ff0000"/>
<rect x="1614" y="369" width="1" height="1" fill="#ff3a3a"/>
<rect x="1622" y="369" width="1" height="1" fill="#a80000"/>
<rect x="1646" y="368" width="9" height="2" fill="#ff0000"/>
<rect x="1646" y="368" width="1" height="2" fill="#ff3a3a"/>
<rect x="1654" y="368" width="1" height="2" fill="#a80000"/>
<rect x="1657" y="369" width="8" height="1" fill="#ff0000"/>
<rect x="1657" y="369" width="1" height="1" fill="#ff3a3a"/>
<rect x="1664" y="369" width="1" height="1" fill="#a80000"/>
<rect x="1667" y="369" width="9" height="1" fill="#ff0000"/>
<rect x="1667" y="369" width="1" height="1" fill="#ff3a3a"/>
<rect x="1675" y="369" width="1" height="1" fill="#a80000"/>
<rect x="1678" y="368" width="8" height="2" fill="#ff0000"/>
<rect x="1678" y="368" width="1" height="2" fill="#ff3a3a"/>
<rect x="1685" y="368" width="1" height="2" fill="#a80000"/>
<rect x="1710" y="368" width="8" height="2" fill="#ff0000"/>
<rect x="1710" y="368" width="1" height="2" fill="#ff3a3a"/>
<rect x="1717" y="368" width="1" height="2" fill="#a80000"/>
<rect x="1720" y="368" width="9" height="2" fill="#ff0000"/>
<rect x="1720" y="368" width="1" height="2" fill="#ff3a3a"/>
<rect x="1728" y="368" width="1" height="2" fill="#a80000"/>
<rect x="1731" y="368" width="8" height="2" fill="#ff0000"/>
<rect x="1731" y="368" width="1" height="2" fill="#ff3a3a"/>
<rect x="1738" y="368" width="1" height="2" fill="#a80000"/>
<rect x="1742" y="368" width="8" height="2" fill="#ff0000"/>
<rect x="1742" y="368" width="1" height="2" fill="#ff3a3a"/>
<rect x="1749" y="368" width="1" height="2" fill="#a80000"/>
<rect x="1773" y="369" width="9" height="1" fill="#ff0000"/>
<rect x="1773" y="369" width="1" height="1" fill="#ff3a3a"/>
<rect x="1781" y="369" width="1" height="1" fill="#a80000"/>
<rect x="1784" y="368" width="9" height="2" fill="#ff0000"/>
<rect x="1784" y="368" width="1" height="2" fill="#ff3a3a"/>
<rect x="1792" y="368" width="1" height="2" fill="#a80000"/>
<rect x="1795" y="368" width="8" height="2" fill="#ff0000"/>
<rect x="1795" y="368" width="1" height="2" fill="#ff3a3a"/>
<rect x="1802" y="368" width="1" height="2" fill="#a80000"/>
<rect x="1805" y="369" width="9" height="1" fill="#ff0000"/>
<rect x="1805" y="369" width="1" height="1" fill="#ff3a3a"/>
<rect x="1813" y="369" width="1" height="1" fill="#a80000"/>
<rect x="1051" y="135" width="765" height="1" fill="#000"/>
<rect x="1051" y="370" width="765" height="1" fill="#000"/>
<rect x="1051" y="135" width="1" height="236" fill="#000"/>
<rect x="1815" y="135" width="1" height="236" fill="#000"/>
<rect x="1051" y="370" width="24" height="1" fill="#000"/>
<text x="1045.4" y="373.5" font-size="10" font-weight="normal" fill="#000" text-anchor="end">0</text>
<rect x="1051" y="361" width="12" height="1" fill="#000"/>
<rect x="1051" y="352" width="12" height="1" fill="#000"/>
<rect x="1051" y="343" width="12" height="1" fill="#000"/>
<rect x="1051" y="334" width="24" height="1" fill="#000"/>
<text x="1045.4" y="337.5" font-size="10" font-weight="normal" fill="#000" text-anchor="end">2000</text>
<rect x="1051" y="325" width="12" height="1" fill="#000"/>
<rect x="1051" y="317" width="12" height="1" fill="#000"/>
<rect x="1051" y="308" width="12" height="1" fill="#000"/>
<rect x="1051" y="299" width="24" height="1" fill="#000"/>
<text x="1045.4" y="302.5" font-size="10" font-weight="normal" fill="#000" text-anchor="end">4000</text>
<rect x="1051" y="290" width="12" height="1" fill="#000"/>
<rect x="1051" y="281" width="12" height="1" fill="#000"/>
<rect x="1051" y="272" width="12" height="1" fill="#000"/>
<rect x="1051" y="263" width="24" height="1" fill="#000"/>
<text x="1045.4" y="266.5" font-size="10" font-weight="normal" fill="#000" text-anchor="end">6000</text>
<rect x="1051" y="254" width="12" height="1" fill="#000"/>
<rect x="1051" y="245" width="12" height="1" fill="#000"/>
<rect x="1051" y="236" width="12" height="1" fill="#000"/>
<rect x="1051" y="227" width="24" height="1" fill="#000"/>
<text x="1045.4" y="230.5" font-size="10" font-weight="normal" fill="#000" text-anchor="end">8000</text>
<rect x="1051" y="218" width="12" height="1" fill="#000"/>
<rect x="1051" y="210" width="12" height="1" fill="#000"/>
<rect x="1051" y="201" width="12" height="1" fill="#000"/>
<rect x="1051" y="192" width="24" height="1" fill="#000"/>
<text x="1045.4" y="195.5" font-size="10" font-weight="normal" fill="#000" text-anchor="end">10000</text>
<rect x="1051" y="183" width="12" height="1" fill="#000"/>
<rect x="1051" y="174" width="12" height="1" fill="#000"/>
<rect x="1051" y="165" width="12" height="1" fill="#000"/>
<rect x="1051" y="156" width="24" height="1" fill="#000"/>
<text x="1045.4" y="159.5" font-size="10" font-weight="normal" fill="#000" text-anchor="end">12000</text>
<rect x="1051" y="147" width="12" height="1" fill="#000"/>
<rect x="1051" y="138" width="12" height="1" fill="#000"/>
<rect x="1062" y="363" width="1" height="8" fill="#000"/>
<rect x="1072" y="363" width="1" height="8" fill="#000"/>
<rect x="1083" y="363" width="1" height="8" fill="#000"/>
<rect x="1093" y="363" width="1" height="8" fill="#000"/>
<rect x="1104" y="363" width="1" height="8" fill="#000"/>
<rect x="1115" y="363" width="1" height="8" fill="#000"/>
<rect x="1125" y="363" width="1" height="8" fill="#000"/>
<rect x="1136" y="363" width="1" height="8" fill="#000"/>
<rect x="1146" y="363" width="1" height="8" fill="#000"/>
<rect x="1157" y="363" width="1" height="8" fill="#000"/>
<rect x="1168" y="363" width="1" height="8" fill="#000"/>
<rect x="1178" y="363" width="1" height="8" fill="#000"/>
<rect x="1189" y="363" width="1" height="8" fill="#000"/>
<rect x="1200" y="363" width="1" height="8" fill="#000"/>
<rect x="1210" y="363" width="1" height="8" fill="#000"/>
<rect x="1221" y="363" width="1" height="8" fill="#000"/>
<rect x="1231" y="363" width="1" height="8" fill="#000"/>
<rect x="1242" y="363" width="1" height="8" fill="#000"/>
<rect x="1253" y="363" width="1" height="8" fill="#000"/>
<rect x="1263" y="363" width="1" height="8" fill="#000"/>
<rect x="1274" y="363" width="1" height="8" fill="#000"/>
<rect x="1284" y="363" width="1" height="8" fill="#000"/>
<rect x="1295" y="363" width="1" height="8" fill="#000"/>
<rect x="1306" y="363" width="1" height="8" fill="#000"/>
<rect x="1316" y="363" width="1" height="8" fill="#000"/>
<rect x="1327" y="363" width="1" height="8" fill="#000"/>
<rect x="1338" y="363" width="1" height="8" fill="#000"/>
<rect x="1348" y="363" width="1" height="8" fill="#000"/>
<rect x="1359" y="363" width="1" height="8" fill="#000"/>
<rect x="1369" y="363" width="1" height="8" fill="#000"/>
<rect x="1380" y="363" width="1" height="8" fill="#000"/>
<rect x="1391" y="363" width="1" height="8" fill="#000"/>
<rect x="1401" y="363" width="1" height="8" fill="#000"/>
<rect x="1412" y="363" width="1" height="8" fill="#000"/>
<rect x="1422" y="363" width="1" height="8" fill="#000"/>
<rect x="1433" y="363" width="1" height="8" fill="#000"/>
<rect x="1444" y="363" width="1" height="8" fill="#000"/>
<rect x="1454" y="363" width="1" height="8" fill="#000"/>
<rect x="1465" y="363" width="1" height="8" fill="#000"/>
<rect x="1475" y="363" width="1" height="8" fill="#000"/>
<rect x="1486" y="363" width="1" height="8" fill="#000"/>
<rect x="1497" y="363" width="1" height="8" fill="#000"/>
<rect x="1507" y="363" width="1" height="8" fill="#000"/>
<rect x="1518" y="363" width="1" height="8" fill="#000"/>
<rect x="1528" y="363" width="1" height="8" fill="#000"/>
<rect x="1539" y="363" width="1" height="8" fill="#000"/>
<rect x="1550" y="363" width="1" height="8" fill="#000"/>
<rect x="1560" y="363" width="1" height="8" fill="#000"/>
<rect x="1571" y="363" width="1" height="8" fill="#000"/>
<rect x="1582" y="363" width="1" height="8" fill="#000"/>
<rect x="1592" y="363" width="1" height="8" fill="#000"/>
<rect x="1603" y="363" width="1" height="8" fill="#000"/>
<rect x="1613" y="363" width="1" height="8" fill="#000"/>
<rect x="1624" y="363" width="1" height="8" fill="#000"/>
<rect x="1635" y="363" width="1" height="8" fill="#000"/>
<rect x="1645" y="363" width="1" height="8" fill="#000"/>
<rect x="1656" y="363" width="1" height="8" fill="#000"/>
<rect x="1666" y="363" width="1" height="8" fill="#000"/>
<rect x="1677" y="363" width="1" height="8" fill="#000"/>
<rect x="1688" y="363" width="1" height="8" fill="#000"/>
<rect x="1698" y="363" width="1" height="8" fill="#000"/>
<rect x="1709" y="363" width="1" height="8" fill="#000"/>
<rect x="1720" y="363" width="1" height="8" fill="#000"/>
<rect x="1730" y="363" width="1" height="8" fill="#000"/>
<rect x="1741" y="363" width="1" height="8" fill="#000"/>
<rect x="1751" y="363" width="1" height="8" fill="#000"/>
<rect x="1762" y="363" width="1" height="8" fill="#000"/>
<rect x="1773" y="363" width="1" height="8" fill="#000"/>
<rect x="1783" y="363" width="1" height="8" fill="#000"/>
<rect x="1794" y="363" width="1" height="8" fill="#000"/>
<rect x="1804" y="363" width="1" height="8" fill="#000"/>
<text transform="translate(1057.71,373.00) rotate(-90)" font-size="6.1" fill="#000" stroke="#000" stroke-width="0.12" text-anchor="end">R2A1_BGO1</text>
<text transform="translate(1068.32,373.00) rotate(-90)" font-size="6.1" fill="#000" stroke="#000" stroke-width="0.12" text-anchor="end">R2A1_BGO2</text>
<text transform="translate(1078.93,373.00) rotate(-90)" font-size="6.1" fill="#000" stroke="#000" stroke-width="0.12" text-anchor="end">R2A1_red</text>
<text transform="translate(1089.54,373.00) rotate(-90)" font-size="6.1" fill="#000" stroke="#000" stroke-width="0.12" text-anchor="end">R2A1_black</text>
<text transform="translate(1100.15,373.00) rotate(-90)" font-size="6.1" fill="#000" stroke="#000" stroke-width="0.12" text-anchor="end">R2A1_green</text>
<text transform="translate(1110.76,373.00) rotate(-90)" font-size="6.1" fill="#000" stroke="#000" stroke-width="0.12" text-anchor="end">R2A1_blue</text>
<text transform="translate(1121.37,373.00) rotate(-90)" font-size="6.1" fill="#000" stroke="#000" stroke-width="0.12" text-anchor="end">R2A2_BGO1</text>
<text transform="translate(1131.98,373.00) rotate(-90)" font-size="6.1" fill="#000" stroke="#000" stroke-width="0.12" text-anchor="end">R2A2_BGO2</text>
<text transform="translate(1142.59,373.00) rotate(-90)" font-size="6.1" fill="#000" stroke="#000" stroke-width="0.12" text-anchor="end">R2A2_red</text>
<text transform="translate(1153.21,373.00) rotate(-90)" font-size="6.1" fill="#000" stroke="#000" stroke-width="0.12" text-anchor="end">R2A2_black</text>
<text transform="translate(1163.82,373.00) rotate(-90)" font-size="6.1" fill="#000" stroke="#000" stroke-width="0.12" text-anchor="end">R2A2_green</text>
<text transform="translate(1174.43,373.00) rotate(-90)" font-size="6.1" fill="#000" stroke="#000" stroke-width="0.12" text-anchor="end">R2A2_blue</text>
<text transform="translate(1185.04,373.00) rotate(-90)" font-size="6.1" fill="#000" stroke="#000" stroke-width="0.12" text-anchor="end">R2A3_BGO1</text>
<text transform="translate(1195.65,373.00) rotate(-90)" font-size="6.1" fill="#000" stroke="#000" stroke-width="0.12" text-anchor="end">R2A3_BGO2</text>
<text transform="translate(1206.26,373.00) rotate(-90)" font-size="6.1" fill="#000" stroke="#000" stroke-width="0.12" text-anchor="end">R2A3_red</text>
<text transform="translate(1216.87,373.00) rotate(-90)" font-size="6.1" fill="#000" stroke="#000" stroke-width="0.12" text-anchor="end">R2A3_black</text>
<text transform="translate(1227.48,373.00) rotate(-90)" font-size="6.1" fill="#000" stroke="#000" stroke-width="0.12" text-anchor="end">R2A3_green</text>
<text transform="translate(1238.09,373.00) rotate(-90)" font-size="6.1" fill="#000" stroke="#000" stroke-width="0.12" text-anchor="end">R2A3_blue</text>
<text transform="translate(1248.71,373.00) rotate(-90)" font-size="6.1" fill="#000" stroke="#000" stroke-width="0.12" text-anchor="end">R2A4_BGO1</text>
<text transform="translate(1259.32,373.00) rotate(-90)" font-size="6.1" fill="#000" stroke="#000" stroke-width="0.12" text-anchor="end">R2A4_BGO2</text>
<text transform="translate(1269.93,373.00) rotate(-90)" font-size="6.1" fill="#000" stroke="#000" stroke-width="0.12" text-anchor="end">R2A4_red</text>
<text transform="translate(1280.54,373.00) rotate(-90)" font-size="6.1" fill="#000" stroke="#000" stroke-width="0.12" text-anchor="end">R2A4_black</text>
<text transform="translate(1291.15,373.00) rotate(-90)" font-size="6.1" fill="#000" stroke="#000" stroke-width="0.12" text-anchor="end">R2A4_green</text>
<text transform="translate(1301.76,373.00) rotate(-90)" font-size="6.1" fill="#000" stroke="#000" stroke-width="0.12" text-anchor="end">R2A4_blue</text>
<text transform="translate(1312.37,373.00) rotate(-90)" font-size="6.1" fill="#000" stroke="#000" stroke-width="0.12" text-anchor="end">R2A5_BGO1</text>
<text transform="translate(1322.98,373.00) rotate(-90)" font-size="6.1" fill="#000" stroke="#000" stroke-width="0.12" text-anchor="end">R2A5_BGO2</text>
<text transform="translate(1333.59,373.00) rotate(-90)" font-size="6.1" fill="#000" stroke="#000" stroke-width="0.12" text-anchor="end">R2A5_red</text>
<text transform="translate(1344.21,373.00) rotate(-90)" font-size="6.1" fill="#000" stroke="#000" stroke-width="0.12" text-anchor="end">R2A5_black</text>
<text transform="translate(1354.82,373.00) rotate(-90)" font-size="6.1" fill="#000" stroke="#000" stroke-width="0.12" text-anchor="end">R2A5_green</text>
<text transform="translate(1365.43,373.00) rotate(-90)" font-size="6.1" fill="#000" stroke="#000" stroke-width="0.12" text-anchor="end">R2A5_blue</text>
<text transform="translate(1376.04,373.00) rotate(-90)" font-size="6.1" fill="#000" stroke="#000" stroke-width="0.12" text-anchor="end">R2A6_BGO1</text>
<text transform="translate(1386.65,373.00) rotate(-90)" font-size="6.1" fill="#000" stroke="#000" stroke-width="0.12" text-anchor="end">R2A6_BGO2</text>
<text transform="translate(1397.26,373.00) rotate(-90)" font-size="6.1" fill="#000" stroke="#000" stroke-width="0.12" text-anchor="end">R2A6_red</text>
<text transform="translate(1407.87,373.00) rotate(-90)" font-size="6.1" fill="#000" stroke="#000" stroke-width="0.12" text-anchor="end">R2A6_black</text>
<text transform="translate(1418.48,373.00) rotate(-90)" font-size="6.1" fill="#000" stroke="#000" stroke-width="0.12" text-anchor="end">R2A6_green</text>
<text transform="translate(1429.09,373.00) rotate(-90)" font-size="6.1" fill="#000" stroke="#000" stroke-width="0.12" text-anchor="end">R2A6_blue</text>
<text transform="translate(1439.71,373.00) rotate(-90)" font-size="6.1" fill="#000" stroke="#000" stroke-width="0.12" text-anchor="end">R2A7_BGO1</text>
<text transform="translate(1450.32,373.00) rotate(-90)" font-size="6.1" fill="#000" stroke="#000" stroke-width="0.12" text-anchor="end">R2A7_BGO2</text>
<text transform="translate(1460.93,373.00) rotate(-90)" font-size="6.1" fill="#000" stroke="#000" stroke-width="0.12" text-anchor="end">R2A7_red</text>
<text transform="translate(1471.54,373.00) rotate(-90)" font-size="6.1" fill="#000" stroke="#000" stroke-width="0.12" text-anchor="end">R2A7_black</text>
<text transform="translate(1482.15,373.00) rotate(-90)" font-size="6.1" fill="#000" stroke="#000" stroke-width="0.12" text-anchor="end">R2A7_green</text>
<text transform="translate(1492.76,373.00) rotate(-90)" font-size="6.1" fill="#000" stroke="#000" stroke-width="0.12" text-anchor="end">R2A7_blue</text>
<text transform="translate(1503.37,373.00) rotate(-90)" font-size="6.1" fill="#000" stroke="#000" stroke-width="0.12" text-anchor="end">R2A8_BGO1</text>
<text transform="translate(1513.98,373.00) rotate(-90)" font-size="6.1" fill="#000" stroke="#000" stroke-width="0.12" text-anchor="end">R2A8_BGO2</text>
<text transform="translate(1524.59,373.00) rotate(-90)" font-size="6.1" fill="#000" stroke="#000" stroke-width="0.12" text-anchor="end">R2A8_red</text>
<text transform="translate(1535.21,373.00) rotate(-90)" font-size="6.1" fill="#000" stroke="#000" stroke-width="0.12" text-anchor="end">R2A8_black</text>
<text transform="translate(1545.82,373.00) rotate(-90)" font-size="6.1" fill="#000" stroke="#000" stroke-width="0.12" text-anchor="end">R2A8_green</text>
<text transform="translate(1556.43,373.00) rotate(-90)" font-size="6.1" fill="#000" stroke="#000" stroke-width="0.12" text-anchor="end">R2A8_blue</text>
<text transform="translate(1567.04,373.00) rotate(-90)" font-size="6.1" fill="#000" stroke="#000" stroke-width="0.12" text-anchor="end">R2A9_BGO1</text>
<text transform="translate(1577.65,373.00) rotate(-90)" font-size="6.1" fill="#000" stroke="#000" stroke-width="0.12" text-anchor="end">R2A9_BGO2</text>
<text transform="translate(1588.26,373.00) rotate(-90)" font-size="6.1" fill="#000" stroke="#000" stroke-width="0.12" text-anchor="end">R2A9_red</text>
<text transform="translate(1598.87,373.00) rotate(-90)" font-size="6.1" fill="#000" stroke="#000" stroke-width="0.12" text-anchor="end">R2A9_black</text>
<text transform="translate(1609.48,373.00) rotate(-90)" font-size="6.1" fill="#000" stroke="#000" stroke-width="0.12" text-anchor="end">R2A9_green</text>
<text transform="translate(1620.09,373.00) rotate(-90)" font-size="6.1" fill="#000" stroke="#000" stroke-width="0.12" text-anchor="end">R2A9_blue</text>
<text transform="translate(1630.71,373.00) rotate(-90)" font-size="6.1" fill="#000" stroke="#000" stroke-width="0.12" text-anchor="end">R2A10_BGO1</text>
<text transform="translate(1641.32,373.00) rotate(-90)" font-size="6.1" fill="#000" stroke="#000" stroke-width="0.12" text-anchor="end">R2A10_BGO2</text>
<text transform="translate(1651.93,373.00) rotate(-90)" font-size="6.1" fill="#000" stroke="#000" stroke-width="0.12" text-anchor="end">R2A10_red</text>
<text transform="translate(1662.54,373.00) rotate(-90)" font-size="6.1" fill="#000" stroke="#000" stroke-width="0.12" text-anchor="end">R2A10_black</text>
<text transform="translate(1673.15,373.00) rotate(-90)" font-size="6.1" fill="#000" stroke="#000" stroke-width="0.12" text-anchor="end">R2A10_green</text>
<text transform="translate(1683.76,373.00) rotate(-90)" font-size="6.1" fill="#000" stroke="#000" stroke-width="0.12" text-anchor="end">R2A10_blue</text>
<text transform="translate(1694.37,373.00) rotate(-90)" font-size="6.1" fill="#000" stroke="#000" stroke-width="0.12" text-anchor="end">R2A11_BGO1</text>
<text transform="translate(1704.98,373.00) rotate(-90)" font-size="6.1" fill="#000" stroke="#000" stroke-width="0.12" text-anchor="end">R2A11_BGO2</text>
<text transform="translate(1715.59,373.00) rotate(-90)" font-size="6.1" fill="#000" stroke="#000" stroke-width="0.12" text-anchor="end">R2A11_red</text>
<text transform="translate(1726.21,373.00) rotate(-90)" font-size="6.1" fill="#000" stroke="#000" stroke-width="0.12" text-anchor="end">R2A11_black</text>
<text transform="translate(1736.82,373.00) rotate(-90)" font-size="6.1" fill="#000" stroke="#000" stroke-width="0.12" text-anchor="end">R2A11_green</text>
<text transform="translate(1747.43,373.00) rotate(-90)" font-size="6.1" fill="#000" stroke="#000" stroke-width="0.12" text-anchor="end">R2A11_blue</text>
<text transform="translate(1758.04,373.00) rotate(-90)" font-size="6.1" fill="#000" stroke="#000" stroke-width="0.12" text-anchor="end">R2A12_BGO1</text>
<text transform="translate(1768.65,373.00) rotate(-90)" font-size="6.1" fill="#000" stroke="#000" stroke-width="0.12" text-anchor="end">R2A12_BGO2</text>
<text transform="translate(1779.26,373.00) rotate(-90)" font-size="6.1" fill="#000" stroke="#000" stroke-width="0.12" text-anchor="end">R2A12_red</text>
<text transform="translate(1789.87,373.00) rotate(-90)" font-size="6.1" fill="#000" stroke="#000" stroke-width="0.12" text-anchor="end">R2A12_black</text>
<text transform="translate(1800.48,373.00) rotate(-90)" font-size="6.1" fill="#000" stroke="#000" stroke-width="0.12" text-anchor="end">R2A12_green</text>
<text transform="translate(1811.09,373.00) rotate(-90)" font-size="6.1" fill="#000" stroke="#000" stroke-width="0.12" text-anchor="end">R2A12_blue</text>
<text transform="translate(1050.0,145.1) scale(0.9,1)" font-size="16" font-weight="bold" fill="#ff0000">R</text>
<rect x="963" y="110" width="2" height="15" fill="#000"/>
<rect x="963" y="124" width="217" height="1" fill="#000"/>
<rect x="965" y="107" width="219" height="17" fill="#f2f2f2"/>
<rect x="965" y="107" width="219" height="1" fill="#000"/>
<rect x="965" y="123" width="219" height="1" fill="#000"/>
<rect x="965" y="107" width="1" height="17" fill="#000"/>
<rect x="1183" y="107" width="1" height="17" fill="#000"/>
<text x="1073.8" y="118" font-size="13" font-weight="bold" fill="#000" text-anchor="middle">RING2_COUNTERS</text>
</g>
<rect x="1700" y="107" width="192" height="48" fill="#f2f2f2"/>
<rect x="1892" y="110" width="1" height="46" fill="#000"/>
<rect x="1703" y="155" width="190" height="1" fill="#000"/>
<rect x="1700" y="107" width="192" height="1" fill="#000"/>
<rect x="1700" y="154" width="192" height="1" fill="#000"/>
<rect x="1700" y="107" width="1" height="48" fill="#000"/>
<rect x="1891" y="107" width="1" height="48" fill="#000"/>
<rect x="1700" y="119" width="192" height="1" fill="#000"/>
<text x="1796" y="116.2" font-size="10" font-weight="bold" fill="#000" text-anchor="middle">RING2_COUNTERS_GRAPH</text>
<text x="1709" y="128.6" font-size="10" font-weight="bold" fill="#000" text-anchor="start">Entries</text>
<text x="1881" y="128.6" font-size="10" font-weight="bold" fill="#000" text-anchor="end">1980</text>
<text x="1709" y="140.1" font-size="10" font-weight="bold" fill="#000" text-anchor="start">Mean</text>
<text x="1881" y="140.1" font-size="10" font-weight="bold" fill="#000" text-anchor="end">0</text>
<text x="1709" y="151.6" font-size="10" font-weight="bold" fill="#000" text-anchor="start">Std Dev</text>
<text x="1881" y="151.6" font-size="10" font-weight="bold" fill="#000" text-anchor="end">0</text>
<g clip-path="url(#pc2)">
<rect x="97" y="607" width="8" height="57" fill="#ff0000"/>
<rect x="97" y="607" width="1" height="57" fill="#ff3a3a"/>
<rect x="104" y="607" width="1" height="57" fill="#a80000"/>
<rect x="107" y="630" width="9" height="34" fill="#ff0000"/>
<rect x="107" y="630" width="1" height="34" fill="#ff3a3a"/>
<rect x="115" y="630" width="1" height="34" fill="#a80000"/>
<rect x="118" y="658" width="9" height="6" fill="#ff0000"/>
<rect x="118" y="658" width="1" height="6" fill="#ff3a3a"/>
<rect x="126" y="658" width="1" height="6" fill="#a80000"/>
<rect x="129" y="659" width="8" height="5" fill="#ff0000"/>
<rect x="129" y="659" width="1" height="5" fill="#ff3a3a"/>
<rect x="136" y="659" width="1" height="5" fill="#a80000"/>
<rect x="139" y="660" width="9" height="4" fill="#ff0000"/>
<rect x="139" y="660" width="1" height="4" fill="#ff3a3a"/>
<rect x="147" y="660" width="1" height="4" fill="#a80000"/>
<rect x="150" y="660" width="8" height="4" fill="#ff0000"/>
<rect x="150" y="660" width="1" height="4" fill="#ff3a3a"/>
<rect x="157" y="660" width="1" height="4" fill="#a80000"/>
<rect x="161" y="622" width="8" height="42" fill="#ff0000"/>
<rect x="161" y="622" width="1" height="42" fill="#ff3a3a"/>
<rect x="168" y="622" width="1" height="42" fill="#a80000"/>
<rect x="171" y="641" width="9" height="23" fill="#ff0000"/>
<rect x="171" y="641" width="1" height="23" fill="#ff3a3a"/>
<rect x="179" y="641" width="1" height="23" fill="#a80000"/>
<rect x="182" y="659" width="8" height="5" fill="#ff0000"/>
<rect x="182" y="659" width="1" height="5" fill="#ff3a3a"/>
<rect x="189" y="659" width="1" height="5" fill="#a80000"/>
<rect x="192" y="658" width="9" height="6" fill="#ff0000"/>
<rect x="192" y="658" width="1" height="6" fill="#ff3a3a"/>
<rect x="200" y="658" width="1" height="6" fill="#a80000"/>
<rect x="203" y="658" width="8" height="6" fill="#ff0000"/>
<rect x="203" y="658" width="1" height="6" fill="#ff3a3a"/>
<rect x="210" y="658" width="1" height="6" fill="#a80000"/>
<rect x="214" y="657" width="8" height="7" fill="#ff0000"/>
<rect x="214" y="657" width="1" height="7" fill="#ff3a3a"/>
<rect x="221" y="657" width="1" height="7" fill="#a80000"/>
<rect x="224" y="644" width="9" height="20" fill="#ff0000"/>
<rect x="224" y="644" width="1" height="20" fill="#ff3a3a"/>
<rect x="232" y="644" width="1" height="20" fill="#a80000"/>
<rect x="235" y="636" width="8" height="28" fill="#ff0000"/>
<rect x="235" y="636" width="1" height="28" fill="#ff3a3a"/>
<rect x="242" y="636" width="1" height="28" fill="#a80000"/>
<rect x="245" y="660" width="9" height="4" fill="#ff0000"/>
<rect x="245" y="660" width="1" height="4" fill="#ff3a3a"/>
<rect x="253" y="660" width="1" height="4" fill="#a80000"/>
<rect x="256" y="658" width="9" height="6" fill="#ff0000"/>
<rect x="256" y="658" width="1" height="6" fill="#ff3a3a"/>
<rect x="264" y="658" width="1" height="6" fill="#a80000"/>
<rect x="267" y="656" width="8" height="8" fill="#ff0000"/>
<rect x="267" y="656" width="1" height="8" fill="#ff3a3a"/>
<rect x="274" y="656" width="1" height="8" fill="#a80000"/>
<rect x="277" y="662" width="9" height="2" fill="#ff0000"/>
<rect x="277" y="662" width="1" height="2" fill="#ff3a3a"/>
<rect x="285" y="662" width="1" height="2" fill="#a80000"/>
<rect x="288" y="620" width="8" height="44" fill="#ff0000"/>
<rect x="288" y="620" width="1" height="44" fill="#ff3a3a"/>
<rect x="295" y="620" width="1" height="44" fill="#a80000"/>
<rect x="298" y="625" width="9" height="39" fill="#ff0000"/>
<rect x="298" y="625" width="1" height="39" fill="#ff3a3a"/>
<rect x="306" y="625" width="1" height="39" fill="#a80000"/>
<rect x="309" y="661" width="9" height="3" fill="#ff0000"/>
<rect x="309" y="661" width="1" height="3" fill="#ff3a3a"/>
<rect x="317" y="661" width="1" height="3" fill="#a80000"/>
<rect x="320" y="661" width="8" height="3" fill="#ff0000"/>
<rect x="320" y="661" width="1" height="3" fill="#ff3a3a"/>
<rect x="327" y="661" width="1" height="3" fill="#a80000"/>
<rect x="330" y="659" width="9" height="5" fill="#ff0000"/>
<rect x="330" y="659" width="1" height="5" fill="#ff3a3a"/>
<rect x="338" y="659" width="1" height="5" fill="#a80000"/>
<rect x="341" y="661" width="8" height="3" fill="#ff0000"/>
<rect x="341" y="661" width="1" height="3" fill="#ff3a3a"/>
<rect x="348" y="661" width="1" height="3" fill="#a80000"/>
<rect x="352" y="632" width="8" height="32" fill="#ff0000"/>
<rect x="352" y="632" width="1" height="32" fill="#ff3a3a"/>
<rect x="359" y="632" width="1" height="32" fill="#a80000"/>
<rect x="362" y="634" width="9" height="30" fill="#ff0000"/>
<rect x="362" y="634" width="1" height="30" fill="#ff3a3a"/>
<rect x="370" y="634" width="1" height="30" fill="#a80000"/>
<rect x="373" y="663" width="8" height="1" fill="#ff0000"/>
<rect x="373" y="663" width="1" height="1" fill="#ff3a3a"/>
<rect x="380" y="663" width="1" height="1" fill="#a80000"/>
<rect x="383" y="662" width="9" height="2" fill="#ff0000"/>
<rect x="383" y="662" width="1" height="2" fill="#ff3a3a"/>
<rect x="391" y="662" width="1" height="2" fill="#a80000"/>
<rect x="394" y="662" width="8" height="2" fill="#ff0000"/>
<rect x="394" y="662" width="1" height="2" fill="#ff3a3a"/>
<rect x="401" y="662" width="1" height="2" fill="#a80000"/>
<rect x="405" y="661" width="8" height="3" fill="#ff0000"/>
<rect x="405" y="661" width="1" height="3" fill="#ff3a3a"/>
<rect x="412" y="661" width="1" height="3" fill="#a80000"/>
<rect x="415" y="513" width="9" height="151" fill="#ff0000"/>
<rect x="415" y="513" width="1" height="151" fill="#ff3a3a"/>
<rect x="423" y="513" width="1" height="151" fill="#a80000"/>
<rect x="426" y="494" width="8" height="170" fill="#ff0000"/>
<rect x="426" y="494" width="1" height="170" fill="#ff3a3a"/>
<rect x="433" y="494" width="1" height="170" fill="#a80000"/>
<rect x="436" y="658" width="9" height="6" fill="#ff0000"/>
<rect x="436" y="658" width="1" height="6" fill="#ff3a3a"/>
<rect x="444" y="658" width="1" height="6" fill="#a80000"/>
<rect x="458" y="657" width="8" height="7" fill="#ff0000"/>
<rect x="458" y="657" width="1" height="7" fill="#ff3a3a"/>
<rect x="465" y="657" width="1" height="7" fill="#a80000"/>
<rect x="468" y="654" width="9" height="10" fill="#ff0000"/>
<rect x="468" y="654" width="1" height="10" fill="#ff3a3a"/>
<rect x="476" y="654" width="1" height="10" fill="#a80000"/>
<rect x="479" y="440" width="8" height="224" fill="#ff0000"/>
<rect x="479" y="440" width="1" height="224" fill="#ff3a3a"/>
<rect x="486" y="440" width="1" height="224" fill="#a80000"/>
<rect x="489" y="444" width="9" height="220" fill="#ff0000"/>
<rect x="489" y="444" width="1" height="220" fill="#ff3a3a"/>
<rect x="497" y="444" width="1" height="220" fill="#a80000"/>
<rect x="521" y="651" width="9" height="13" fill="#ff0000"/>
<rect x="521" y="651" width="1" height="13" fill="#ff3a3a"/>
<rect x="529" y="651" width="1" height="13" fill="#a80000"/>
<rect x="532" y="656" width="8" height="8" fill="#ff0000"/>
<rect x="532" y="656" width="1" height="8" fill="#ff3a3a"/>
<rect x="539" y="656" width="1" height="8" fill="#a80000"/>
<rect x="543" y="620" width="8" height="44" fill="#ff0000"/>
<rect x="543" y="620" width="1" height="44" fill="#ff3a3a"/>
<rect x="550" y="620" width="1" height="44" fill="#a80000"/>
<rect x="553" y="623" width="9" height="41" fill="#ff0000"/>
<rect x="553" y="623" width="1" height="41" fill="#ff3a3a"/>
<rect x="561" y="623" width="1" height="41" fill="#a80000"/>
<rect x="564" y="661" width="8" height="3" fill="#ff0000"/>
<rect x="564" y="661" width="1" height="3" fill="#ff3a3a"/>
<rect x="571" y="661" width="1" height="3" fill="#a80000"/>
<rect x="574" y="662" width="9" height="2" fill="#ff0000"/>
<rect x="574" y="662" width="1" height="2" fill="#ff3a3a"/>
<rect x="582" y="662" width="1" height="2" fill="#a80000"/>
<rect x="585" y="662" width="8" height="2" fill="#ff0000"/>
<rect x="585" y="662" width="1" height="2" fill="#ff3a3a"/>
<rect x="592" y="662" width="1" height="2" fill="#a80000"/>
<rect x="596" y="661" width="8" height="3" fill="#ff0000"/>
<rect x="596" y="661" width="1" height="3" fill="#ff3a3a"/>
<rect x="603" y="661" width="1" height="3" fill="#a80000"/>
<rect x="606" y="640" width="9" height="24" fill="#ff0000"/>
<rect x="606" y="640" width="1" height="24" fill="#ff3a3a"/>
<rect x="614" y="640" width="1" height="24" fill="#a80000"/>
<rect x="617" y="640" width="8" height="24" fill="#ff0000"/>
<rect x="617" y="640" width="1" height="24" fill="#ff3a3a"/>
<rect x="624" y="640" width="1" height="24" fill="#a80000"/>
<rect x="627" y="662" width="9" height="2" fill="#ff0000"/>
<rect x="627" y="662" width="1" height="2" fill="#ff3a3a"/>
<rect x="635" y="662" width="1" height="2" fill="#a80000"/>
<rect x="638" y="662" width="9" height="2" fill="#ff0000"/>
<rect x="638" y="662" width="1" height="2" fill="#ff3a3a"/>
<rect x="646" y="662" width="1" height="2" fill="#a80000"/>
<rect x="649" y="662" width="8" height="2" fill="#ff0000"/>
<rect x="649" y="662" width="1" height="2" fill="#ff3a3a"/>
<rect x="656" y="662" width="1" height="2" fill="#a80000"/>
<rect x="659" y="662" width="9" height="2" fill="#ff0000"/>
<rect x="659" y="662" width="1" height="2" fill="#ff3a3a"/>
<rect x="667" y="662" width="1" height="2" fill="#a80000"/>
<rect x="670" y="592" width="8" height="72" fill="#ff0000"/>
<rect x="670" y="592" width="1" height="72" fill="#ff3a3a"/>
<rect x="677" y="592" width="1" height="72" fill="#a80000"/>
<rect x="680" y="631" width="9" height="33" fill="#ff0000"/>
<rect x="680" y="631" width="1" height="33" fill="#ff3a3a"/>
<rect x="688" y="631" width="1" height="33" fill="#a80000"/>
<rect x="691" y="659" width="9" height="5" fill="#ff0000"/>
<rect x="691" y="659" width="1" height="5" fill="#ff3a3a"/>
<rect x="699" y="659" width="1" height="5" fill="#a80000"/>
<rect x="702" y="661" width="8" height="3" fill="#ff0000"/>
<rect x="702" y="661" width="1" height="3" fill="#ff3a3a"/>
<rect x="709" y="661" width="1" height="3" fill="#a80000"/>
<rect x="734" y="624" width="8" height="40" fill="#ff0000"/>
<rect x="734" y="624" width="1" height="40" fill="#ff3a3a"/>
<rect x="741" y="624" width="1" height="40" fill="#a80000"/>
<rect x="744" y="640" width="9" height="24" fill="#ff0000"/>
<rect x="744" y="640" width="1" height="24" fill="#ff3a3a"/>
<rect x="752" y="640" width="1" height="24" fill="#a80000"/>
<rect x="755" y="660" width="8" height="4" fill="#ff0000"/>
<rect x="755" y="660" width="1" height="4" fill="#ff3a3a"/>
<rect x="762" y="660" width="1" height="4" fill="#a80000"/>
<rect x="765" y="661" width="9" height="3" fill="#ff0000"/>
<rect x="765" y="661" width="1" height="3" fill="#ff3a3a"/>
<rect x="773" y="661" width="1" height="3" fill="#a80000"/>
<rect x="776" y="659" width="8" height="5" fill="#ff0000"/>
<rect x="776" y="659" width="1" height="5" fill="#ff3a3a"/>
<rect x="783" y="659" width="1" height="5" fill="#a80000"/>
<rect x="787" y="659" width="8" height="5" fill="#ff0000"/>
<rect x="787" y="659" width="1" height="5" fill="#ff3a3a"/>
<rect x="794" y="659" width="1" height="5" fill="#a80000"/>
<rect x="797" y="618" width="9" height="46" fill="#ff0000"/>
<rect x="797" y="618" width="1" height="46" fill="#ff3a3a"/>
<rect x="805" y="618" width="1" height="46" fill="#a80000"/>
<rect x="808" y="628" width="8" height="36" fill="#ff0000"/>
<rect x="808" y="628" width="1" height="36" fill="#ff3a3a"/>
<rect x="815" y="628" width="1" height="36" fill="#a80000"/>
<rect x="818" y="660" width="9" height="4" fill="#ff0000"/>
<rect x="818" y="660" width="1" height="4" fill="#ff3a3a"/>
<rect x="826" y="660" width="1" height="4" fill="#a80000"/>
<rect x="829" y="660" width="9" height="4" fill="#ff0000"/>
<rect x="829" y="660" width="1" height="4" fill="#ff3a3a"/>
<rect x="837" y="660" width="1" height="4" fill="#a80000"/>
<rect x="840" y="660" width="8" height="4" fill="#ff0000"/>
<rect x="840" y="660" width="1" height="4" fill="#ff3a3a"/>
<rect x="847" y="660" width="1" height="4" fill="#a80000"/>
<rect x="850" y="660" width="9" height="4" fill="#ff0000"/>
<rect x="850" y="660" width="1" height="4" fill="#ff3a3a"/>
<rect x="858" y="660" width="1" height="4" fill="#a80000"/>
<rect x="96" y="429" width="765" height="1" fill="#000"/>
<rect x="96" y="664" width="765" height="1" fill="#000"/>
<rect x="96" y="429" width="1" height="236" fill="#000"/>
<rect x="860" y="429" width="1" height="236" fill="#000"/>
<rect x="96" y="664" width="24" height="1" fill="#000"/>
<text x="90.4" y="667.5" font-size="10" font-weight="normal" fill="#000" text-anchor="end">0</text>
<rect x="96" y="659" width="12" height="1" fill="#000"/>
<rect x="96" y="655" width="12" height="1" fill="#000"/>
<rect x="96" y="650" width="12" height="1" fill="#000"/>
<rect x="96" y="645" width="12" height="1" fill="#000"/>
<rect x="96" y="640" width="24" height="1" fill="#000"/>
<text x="90.4" y="643.5" font-size="10" font-weight="normal" fill="#000" text-anchor="end">500</text>
<rect x="96" y="636" width="12" height="1" fill="#000"/>
<rect x="96" y="631" width="12" height="1" fill="#000"/>
<rect x="96" y="626" width="12" height="1" fill="#000"/>
<rect x="96" y="622" width="12" height="1" fill="#000"/>
<rect x="96" y="617" width="24" height="1" fill="#000"/>
<text x="90.4" y="620.5" font-size="10" font-weight="normal" fill="#000" text-anchor="end">1000</text>
<rect x="96" y="612" width="12" height="1" fill="#000"/>
<rect x="96" y="607" width="12" height="1" fill="#000"/>
<rect x="96" y="603" width="12" height="1" fill="#000"/>
<rect x="96" y="598" width="12" height="1" fill="#000"/>
<rect x="96" y="593" width="24" height="1" fill="#000"/>
<text x="90.4" y="596.5" font-size="10" font-weight="normal" fill="#000" text-anchor="end">1500</text>
<rect x="96" y="589" width="12" height="1" fill="#000"/>
<rect x="96" y="584" width="12" height="1" fill="#000"/>
<rect x="96" y="579" width="12" height="1" fill="#000"/>
<rect x="96" y="574" width="12" height="1" fill="#000"/>
<rect x="96" y="570" width="24" height="1" fill="#000"/>
<text x="90.4" y="573.5" font-size="10" font-weight="normal" fill="#000" text-anchor="end">2000</text>
<rect x="96" y="565" width="12" height="1" fill="#000"/>
<rect x="96" y="560" width="12" height="1" fill="#000"/>
<rect x="96" y="556" width="12" height="1" fill="#000"/>
<rect x="96" y="551" width="12" height="1" fill="#000"/>
<rect x="96" y="546" width="24" height="1" fill="#000"/>
<text x="90.4" y="549.5" font-size="10" font-weight="normal" fill="#000" text-anchor="end">2500</text>
<rect x="96" y="542" width="12" height="1" fill="#000"/>
<rect x="96" y="537" width="12" height="1" fill="#000"/>
<rect x="96" y="532" width="12" height="1" fill="#000"/>
<rect x="96" y="527" width="12" height="1" fill="#000"/>
<rect x="96" y="523" width="24" height="1" fill="#000"/>
<text x="90.4" y="526.5" font-size="10" font-weight="normal" fill="#000" text-anchor="end">3000</text>
<rect x="96" y="518" width="12" height="1" fill="#000"/>
<rect x="96" y="513" width="12" height="1" fill="#000"/>
<rect x="96" y="509" width="12" height="1" fill="#000"/>
<rect x="96" y="504" width="12" height="1" fill="#000"/>
<rect x="96" y="499" width="24" height="1" fill="#000"/>
<text x="90.4" y="502.5" font-size="10" font-weight="normal" fill="#000" text-anchor="end">3500</text>
<rect x="96" y="494" width="12" height="1" fill="#000"/>
<rect x="96" y="490" width="12" height="1" fill="#000"/>
<rect x="96" y="485" width="12" height="1" fill="#000"/>
<rect x="96" y="480" width="12" height="1" fill="#000"/>
<rect x="96" y="476" width="24" height="1" fill="#000"/>
<text x="90.4" y="479.5" font-size="10" font-weight="normal" fill="#000" text-anchor="end">4000</text>
<rect x="96" y="471" width="12" height="1" fill="#000"/>
<rect x="96" y="466" width="12" height="1" fill="#000"/>
<rect x="96" y="461" width="12" height="1" fill="#000"/>
<rect x="96" y="457" width="12" height="1" fill="#000"/>
<rect x="96" y="452" width="24" height="1" fill="#000"/>
<text x="90.4" y="455.5" font-size="10" font-weight="normal" fill="#000" text-anchor="end">4500</text>
<rect x="96" y="447" width="12" height="1" fill="#000"/>
<rect x="96" y="443" width="12" height="1" fill="#000"/>
<rect x="96" y="438" width="12" height="1" fill="#000"/>
<rect x="96" y="433" width="12" height="1" fill="#000"/>
<rect x="107" y="657" width="1" height="8" fill="#000"/>
<rect x="117" y="657" width="1" height="8" fill="#000"/>
<rect x="128" y="657" width="1" height="8" fill="#000"/>
<rect x="138" y="657" width="1" height="8" fill="#000"/>
<rect x="149" y="657" width="1" height="8" fill="#000"/>
<rect x="160" y="657" width="1" height="8" fill="#000"/>
<rect x="170" y="657" width="1" height="8" fill="#000"/>
<rect x="181" y="657" width="1" height="8" fill="#000"/>
<rect x="192" y="657" width="1" height="8" fill="#000"/>
<rect x="202" y="657" width="1" height="8" fill="#000"/>
<rect x="213" y="657" width="1" height="8" fill="#000"/>
<rect x="223" y="657" width="1" height="8" fill="#000"/>
<rect x="234" y="657" width="1" height="8" fill="#000"/>
<rect x="245" y="657" width="1" height="8" fill="#000"/>
<rect x="255" y="657" width="1" height="8" fill="#000"/>
<rect x="266" y="657" width="1" height="8" fill="#000"/>
<rect x="276" y="657" width="1" height="8" fill="#000"/>
<rect x="287" y="657" width="1" height="8" fill="#000"/>
<rect x="298" y="657" width="1" height="8" fill="#000"/>
<rect x="308" y="657" width="1" height="8" fill="#000"/>
<rect x="319" y="657" width="1" height="8" fill="#000"/>
<rect x="329" y="657" width="1" height="8" fill="#000"/>
<rect x="340" y="657" width="1" height="8" fill="#000"/>
<rect x="351" y="657" width="1" height="8" fill="#000"/>
<rect x="361" y="657" width="1" height="8" fill="#000"/>
<rect x="372" y="657" width="1" height="8" fill="#000"/>
<rect x="382" y="657" width="1" height="8" fill="#000"/>
<rect x="393" y="657" width="1" height="8" fill="#000"/>
<rect x="404" y="657" width="1" height="8" fill="#000"/>
<rect x="414" y="657" width="1" height="8" fill="#000"/>
<rect x="425" y="657" width="1" height="8" fill="#000"/>
<rect x="436" y="657" width="1" height="8" fill="#000"/>
<rect x="446" y="657" width="1" height="8" fill="#000"/>
<rect x="457" y="657" width="1" height="8" fill="#000"/>
<rect x="467" y="657" width="1" height="8" fill="#000"/>
<rect x="478" y="657" width="1" height="8" fill="#000"/>
<rect x="489" y="657" width="1" height="8" fill="#000"/>
<rect x="499" y="657" width="1" height="8" fill="#000"/>
<rect x="510" y="657" width="1" height="8" fill="#000"/>
<rect x="520" y="657" width="1" height="8" fill="#000"/>
<rect x="531" y="657" width="1" height="8" fill="#000"/>
<rect x="542" y="657" width="1" height="8" fill="#000"/>
<rect x="552" y="657" width="1" height="8" fill="#000"/>
<rect x="563" y="657" width="1" height="8" fill="#000"/>
<rect x="574" y="657" width="1" height="8" fill="#000"/>
<rect x="584" y="657" width="1" height="8" fill="#000"/>
<rect x="595" y="657" width="1" height="8" fill="#000"/>
<rect x="605" y="657" width="1" height="8" fill="#000"/>
<rect x="616" y="657" width="1" height="8" fill="#000"/>
<rect x="627" y="657" width="1" height="8" fill="#000"/>
<rect x="637" y="657" width="1" height="8" fill="#000"/>
<rect x="648" y="657" width="1" height="8" fill="#000"/>
<rect x="658" y="657" width="1" height="8" fill="#000"/>
<rect x="669" y="657" width="1" height="8" fill="#000"/>
<rect x="680" y="657" width="1" height="8" fill="#000"/>
<rect x="690" y="657" width="1" height="8" fill="#000"/>
<rect x="701" y="657" width="1" height="8" fill="#000"/>
<rect x="711" y="657" width="1" height="8" fill="#000"/>
<rect x="722" y="657" width="1" height="8" fill="#000"/>
<rect x="733" y="657" width="1" height="8" fill="#000"/>
<rect x="743" y="657" width="1" height="8" fill="#000"/>
<rect x="754" y="657" width="1" height="8" fill="#000"/>
<rect x="764" y="657" width="1" height="8" fill="#000"/>
<rect x="775" y="657" width="1" height="8" fill="#000"/>
<rect x="786" y="657" width="1" height="8" fill="#000"/>
<rect x="796" y="657" width="1" height="8" fill="#000"/>
<rect x="807" y="657" width="1" height="8" fill="#000"/>
<rect x="818" y="657" width="1" height="8" fill="#000"/>
<rect x="828" y="657" width="1" height="8" fill="#000"/>
<rect x="839" y="657" width="1" height="8" fill="#000"/>
<rect x="849" y="657" width="1" height="8" fill="#000"/>
<text transform="translate(102.71,667.00) rotate(-90)" font-size="6.1" fill="#000" stroke="#000" stroke-width="0.12" text-anchor="end">R3A1_BGO1</text>
<text transform="translate(113.32,667.00) rotate(-90)" font-size="6.1" fill="#000" stroke="#000" stroke-width="0.12" text-anchor="end">R3A1_BGO2</text>
<text transform="translate(123.93,667.00) rotate(-90)" font-size="6.1" fill="#000" stroke="#000" stroke-width="0.12" text-anchor="end">R3A1_red</text>
<text transform="translate(134.54,667.00) rotate(-90)" font-size="6.1" fill="#000" stroke="#000" stroke-width="0.12" text-anchor="end">R3A1_black</text>
<text transform="translate(145.15,667.00) rotate(-90)" font-size="6.1" fill="#000" stroke="#000" stroke-width="0.12" text-anchor="end">R3A1_green</text>
<text transform="translate(155.76,667.00) rotate(-90)" font-size="6.1" fill="#000" stroke="#000" stroke-width="0.12" text-anchor="end">R3A1_blue</text>
<text transform="translate(166.37,667.00) rotate(-90)" font-size="6.1" fill="#000" stroke="#000" stroke-width="0.12" text-anchor="end">R3A2_BGO1</text>
<text transform="translate(176.98,667.00) rotate(-90)" font-size="6.1" fill="#000" stroke="#000" stroke-width="0.12" text-anchor="end">R3A2_BGO2</text>
<text transform="translate(187.59,667.00) rotate(-90)" font-size="6.1" fill="#000" stroke="#000" stroke-width="0.12" text-anchor="end">R3A2_red</text>
<text transform="translate(198.21,667.00) rotate(-90)" font-size="6.1" fill="#000" stroke="#000" stroke-width="0.12" text-anchor="end">R3A2_black</text>
<text transform="translate(208.82,667.00) rotate(-90)" font-size="6.1" fill="#000" stroke="#000" stroke-width="0.12" text-anchor="end">R3A2_green</text>
<text transform="translate(219.43,667.00) rotate(-90)" font-size="6.1" fill="#000" stroke="#000" stroke-width="0.12" text-anchor="end">R3A2_blue</text>
<text transform="translate(230.04,667.00) rotate(-90)" font-size="6.1" fill="#000" stroke="#000" stroke-width="0.12" text-anchor="end">R3A3_BGO1</text>
<text transform="translate(240.65,667.00) rotate(-90)" font-size="6.1" fill="#000" stroke="#000" stroke-width="0.12" text-anchor="end">R3A3_BGO2</text>
<text transform="translate(251.26,667.00) rotate(-90)" font-size="6.1" fill="#000" stroke="#000" stroke-width="0.12" text-anchor="end">R3A3_red</text>
<text transform="translate(261.87,667.00) rotate(-90)" font-size="6.1" fill="#000" stroke="#000" stroke-width="0.12" text-anchor="end">R3A3_black</text>
<text transform="translate(272.48,667.00) rotate(-90)" font-size="6.1" fill="#000" stroke="#000" stroke-width="0.12" text-anchor="end">R3A3_green</text>
<text transform="translate(283.09,667.00) rotate(-90)" font-size="6.1" fill="#000" stroke="#000" stroke-width="0.12" text-anchor="end">R3A3_blue</text>
<text transform="translate(293.71,667.00) rotate(-90)" font-size="6.1" fill="#000" stroke="#000" stroke-width="0.12" text-anchor="end">R3A4_BGO1</text>
<text transform="translate(304.32,667.00) rotate(-90)" font-size="6.1" fill="#000" stroke="#000" stroke-width="0.12" text-anchor="end">R3A4_BGO2</text>
<text transform="translate(314.93,667.00) rotate(-90)" font-size="6.1" fill="#000" stroke="#000" stroke-width="0.12" text-anchor="end">R3A4_red</text>
<text transform="translate(325.54,667.00) rotate(-90)" font-size="6.1" fill="#000" stroke="#000" stroke-width="0.12" text-anchor="end">R3A4_black</text>
<text transform="translate(336.15,667.00) rotate(-90)" font-size="6.1" fill="#000" stroke="#000" stroke-width="0.12" text-anchor="end">R3A4_green</text>
<text transform="translate(346.76,667.00) rotate(-90)" font-size="6.1" fill="#000" stroke="#000" stroke-width="0.12" text-anchor="end">R3A4_blue</text>
<text transform="translate(357.37,667.00) rotate(-90)" font-size="6.1" fill="#000" stroke="#000" stroke-width="0.12" text-anchor="end">R3A5_BGO1</text>
<text transform="translate(367.98,667.00) rotate(-90)" font-size="6.1" fill="#000" stroke="#000" stroke-width="0.12" text-anchor="end">R3A5_BGO2</text>
<text transform="translate(378.59,667.00) rotate(-90)" font-size="6.1" fill="#000" stroke="#000" stroke-width="0.12" text-anchor="end">R3A5_red</text>
<text transform="translate(389.21,667.00) rotate(-90)" font-size="6.1" fill="#000" stroke="#000" stroke-width="0.12" text-anchor="end">R3A5_black</text>
<text transform="translate(399.82,667.00) rotate(-90)" font-size="6.1" fill="#000" stroke="#000" stroke-width="0.12" text-anchor="end">R3A5_green</text>
<text transform="translate(410.43,667.00) rotate(-90)" font-size="6.1" fill="#000" stroke="#000" stroke-width="0.12" text-anchor="end">R3A5_blue</text>
<text transform="translate(421.04,667.00) rotate(-90)" font-size="6.1" fill="#000" stroke="#000" stroke-width="0.12" text-anchor="end">R3A6_BGO1</text>
<text transform="translate(431.65,667.00) rotate(-90)" font-size="6.1" fill="#000" stroke="#000" stroke-width="0.12" text-anchor="end">R3A6_BGO2</text>
<text transform="translate(442.26,667.00) rotate(-90)" font-size="6.1" fill="#000" stroke="#000" stroke-width="0.12" text-anchor="end">R3A6_red</text>
<text transform="translate(452.87,667.00) rotate(-90)" font-size="6.1" fill="#000" stroke="#000" stroke-width="0.12" text-anchor="end">R3A6_black</text>
<text transform="translate(463.48,667.00) rotate(-90)" font-size="6.1" fill="#000" stroke="#000" stroke-width="0.12" text-anchor="end">R3A6_green</text>
<text transform="translate(474.09,667.00) rotate(-90)" font-size="6.1" fill="#000" stroke="#000" stroke-width="0.12" text-anchor="end">R3A6_blue</text>
<text transform="translate(484.71,667.00) rotate(-90)" font-size="6.1" fill="#000" stroke="#000" stroke-width="0.12" text-anchor="end">R3A7_BGO1</text>
<text transform="translate(495.32,667.00) rotate(-90)" font-size="6.1" fill="#000" stroke="#000" stroke-width="0.12" text-anchor="end">R3A7_BGO2</text>
<text transform="translate(505.93,667.00) rotate(-90)" font-size="6.1" fill="#000" stroke="#000" stroke-width="0.12" text-anchor="end">R3A7_red</text>
<text transform="translate(516.54,667.00) rotate(-90)" font-size="6.1" fill="#000" stroke="#000" stroke-width="0.12" text-anchor="end">R3A7_black</text>
<text transform="translate(527.15,667.00) rotate(-90)" font-size="6.1" fill="#000" stroke="#000" stroke-width="0.12" text-anchor="end">R3A7_green</text>
<text transform="translate(537.76,667.00) rotate(-90)" font-size="6.1" fill="#000" stroke="#000" stroke-width="0.12" text-anchor="end">R3A7_blue</text>
<text transform="translate(548.37,667.00) rotate(-90)" font-size="6.1" fill="#000" stroke="#000" stroke-width="0.12" text-anchor="end">R3A8_BGO1</text>
<text transform="translate(558.98,667.00) rotate(-90)" font-size="6.1" fill="#000" stroke="#000" stroke-width="0.12" text-anchor="end">R3A8_BGO2</text>
<text transform="translate(569.59,667.00) rotate(-90)" font-size="6.1" fill="#000" stroke="#000" stroke-width="0.12" text-anchor="end">R3A8_red</text>
<text transform="translate(580.21,667.00) rotate(-90)" font-size="6.1" fill="#000" stroke="#000" stroke-width="0.12" text-anchor="end">R3A8_black</text>
<text transform="translate(590.82,667.00) rotate(-90)" font-size="6.1" fill="#000" stroke="#000" stroke-width="0.12" text-anchor="end">R3A8_green</text>
<text transform="translate(601.43,667.00) rotate(-90)" font-size="6.1" fill="#000" stroke="#000" stroke-width="0.12" text-anchor="end">R3A8_blue</text>
<text transform="translate(612.04,667.00) rotate(-90)" font-size="6.1" fill="#000" stroke="#000" stroke-width="0.12" text-anchor="end">R3A9_BGO1</text>
<text transform="translate(622.65,667.00) rotate(-90)" font-size="6.1" fill="#000" stroke="#000" stroke-width="0.12" text-anchor="end">R3A9_BGO2</text>
<text transform="translate(633.26,667.00) rotate(-90)" font-size="6.1" fill="#000" stroke="#000" stroke-width="0.12" text-anchor="end">R3A9_red</text>
<text transform="translate(643.87,667.00) rotate(-90)" font-size="6.1" fill="#000" stroke="#000" stroke-width="0.12" text-anchor="end">R3A9_black</text>
<text transform="translate(654.48,667.00) rotate(-90)" font-size="6.1" fill="#000" stroke="#000" stroke-width="0.12" text-anchor="end">R3A9_green</text>
<text transform="translate(665.09,667.00) rotate(-90)" font-size="6.1" fill="#000" stroke="#000" stroke-width="0.12" text-anchor="end">R3A9_blue</text>
<text transform="translate(675.71,667.00) rotate(-90)" font-size="6.1" fill="#000" stroke="#000" stroke-width="0.12" text-anchor="end">R3A10_BGO1</text>
<text transform="translate(686.32,667.00) rotate(-90)" font-size="6.1" fill="#000" stroke="#000" stroke-width="0.12" text-anchor="end">R3A10_BGO2</text>
<text transform="translate(696.93,667.00) rotate(-90)" font-size="6.1" fill="#000" stroke="#000" stroke-width="0.12" text-anchor="end">R3A10_red</text>
<text transform="translate(707.54,667.00) rotate(-90)" font-size="6.1" fill="#000" stroke="#000" stroke-width="0.12" text-anchor="end">R3A10_black</text>
<text transform="translate(718.15,667.00) rotate(-90)" font-size="6.1" fill="#000" stroke="#000" stroke-width="0.12" text-anchor="end">R3A10_green</text>
<text transform="translate(728.76,667.00) rotate(-90)" font-size="6.1" fill="#000" stroke="#000" stroke-width="0.12" text-anchor="end">R3A10_blue</text>
<text transform="translate(739.37,667.00) rotate(-90)" font-size="6.1" fill="#000" stroke="#000" stroke-width="0.12" text-anchor="end">R3A11_BGO1</text>
<text transform="translate(749.98,667.00) rotate(-90)" font-size="6.1" fill="#000" stroke="#000" stroke-width="0.12" text-anchor="end">R3A11_BGO2</text>
<text transform="translate(760.59,667.00) rotate(-90)" font-size="6.1" fill="#000" stroke="#000" stroke-width="0.12" text-anchor="end">R3A11_red</text>
<text transform="translate(771.21,667.00) rotate(-90)" font-size="6.1" fill="#000" stroke="#000" stroke-width="0.12" text-anchor="end">R3A11_black</text>
<text transform="translate(781.82,667.00) rotate(-90)" font-size="6.1" fill="#000" stroke="#000" stroke-width="0.12" text-anchor="end">R3A11_green</text>
<text transform="translate(792.43,667.00) rotate(-90)" font-size="6.1" fill="#000" stroke="#000" stroke-width="0.12" text-anchor="end">R3A11_blue</text>
<text transform="translate(803.04,667.00) rotate(-90)" font-size="6.1" fill="#000" stroke="#000" stroke-width="0.12" text-anchor="end">R3A12_BGO1</text>
<text transform="translate(813.65,667.00) rotate(-90)" font-size="6.1" fill="#000" stroke="#000" stroke-width="0.12" text-anchor="end">R3A12_BGO2</text>
<text transform="translate(824.26,667.00) rotate(-90)" font-size="6.1" fill="#000" stroke="#000" stroke-width="0.12" text-anchor="end">R3A12_red</text>
<text transform="translate(834.87,667.00) rotate(-90)" font-size="6.1" fill="#000" stroke="#000" stroke-width="0.12" text-anchor="end">R3A12_black</text>
<text transform="translate(845.48,667.00) rotate(-90)" font-size="6.1" fill="#000" stroke="#000" stroke-width="0.12" text-anchor="end">R3A12_green</text>
<text transform="translate(856.09,667.00) rotate(-90)" font-size="6.1" fill="#000" stroke="#000" stroke-width="0.12" text-anchor="end">R3A12_blue</text>
<text transform="translate(95.0,439.1) scale(0.9,1)" font-size="16" font-weight="bold" fill="#ff0000">R</text>
<rect x="8" y="404" width="2" height="15" fill="#000"/>
<rect x="8" y="418" width="217" height="1" fill="#000"/>
<rect x="10" y="401" width="219" height="17" fill="#f2f2f2"/>
<rect x="10" y="401" width="219" height="1" fill="#000"/>
<rect x="10" y="417" width="219" height="1" fill="#000"/>
<rect x="10" y="401" width="1" height="17" fill="#000"/>
<rect x="228" y="401" width="1" height="17" fill="#000"/>
<text x="118.8" y="412" font-size="13" font-weight="bold" fill="#000" text-anchor="middle">RING3_COUNTERS</text>
</g>
<rect x="745" y="401" width="192" height="48" fill="#f2f2f2"/>
<rect x="937" y="404" width="1" height="46" fill="#000"/>
<rect x="748" y="449" width="190" height="1" fill="#000"/>
<rect x="745" y="401" width="192" height="1" fill="#000"/>
<rect x="745" y="448" width="192" height="1" fill="#000"/>
<rect x="745" y="401" width="1" height="48" fill="#000"/>
<rect x="936" y="401" width="1" height="48" fill="#000"/>
<rect x="745" y="413" width="192" height="1" fill="#000"/>
<text x="841" y="410.2" font-size="10" font-weight="bold" fill="#000" text-anchor="middle">RING3_COUNTERS_GRAPH</text>
<text x="754" y="422.6" font-size="10" font-weight="bold" fill="#000" text-anchor="start">Entries</text>
<text x="926" y="422.6" font-size="10" font-weight="bold" fill="#000" text-anchor="end">1984</text>
<text x="754" y="434.1" font-size="10" font-weight="bold" fill="#000" text-anchor="start">Mean</text>
<text x="926" y="434.1" font-size="10" font-weight="bold" fill="#000" text-anchor="end">0</text>
<text x="754" y="445.6" font-size="10" font-weight="bold" fill="#000" text-anchor="start">Std Dev</text>
<text x="926" y="445.6" font-size="10" font-weight="bold" fill="#000" text-anchor="end">0</text>
<g clip-path="url(#pc3)">
<rect x="1233" y="633" width="18" height="31" fill="#ff0000"/>
<rect x="1233" y="633" width="2" height="31" fill="#ff3a3a"/>
<rect x="1249" y="633" width="2" height="31" fill="#a80000"/>
<rect x="1255" y="630" width="18" height="34" fill="#ff0000"/>
<rect x="1255" y="630" width="2" height="34" fill="#ff3a3a"/>
<rect x="1271" y="630" width="2" height="34" fill="#a80000"/>
<rect x="1278" y="635" width="18" height="29" fill="#ff0000"/>
<rect x="1278" y="635" width="2" height="29" fill="#ff3a3a"/>
<rect x="1294" y="635" width="2" height="29" fill="#a80000"/>
<rect x="1300" y="613" width="18" height="51" fill="#ff0000"/>
<rect x="1300" y="613" width="2" height="51" fill="#ff3a3a"/>
<rect x="1316" y="613" width="2" height="51" fill="#a80000"/>
<rect x="1323" y="613" width="18" height="51" fill="#ff0000"/>
<rect x="1323" y="613" width="2" height="51" fill="#ff3a3a"/>
<rect x="1339" y="613" width="2" height="51" fill="#a80000"/>
<rect x="1345" y="624" width="18" height="40" fill="#ff0000"/>
<rect x="1345" y="624" width="2" height="40" fill="#ff3a3a"/>
<rect x="1361" y="624" width="2" height="40" fill="#a80000"/>
<rect x="1368" y="552" width="18" height="112" fill="#ff0000"/>
<rect x="1368" y="552" width="2" height="112" fill="#ff3a3a"/>
<rect x="1384" y="552" width="2" height="112" fill="#a80000"/>
<rect x="1390" y="581" width="18" height="83" fill="#ff0000"/>
<rect x="1390" y="581" width="2" height="83" fill="#ff3a3a"/>
<rect x="1406" y="581" width="2" height="83" fill="#a80000"/>
<rect x="1413" y="590" width="18" height="74" fill="#ff0000"/>
<rect x="1413" y="590" width="2" height="74" fill="#ff3a3a"/>
<rect x="1429" y="590" width="2" height="74" fill="#a80000"/>
<rect x="1435" y="513" width="18" height="151" fill="#ff0000"/>
<rect x="1435" y="513" width="2" height="151" fill="#ff3a3a"/>
<rect x="1451" y="513" width="2" height="151" fill="#a80000"/>
<rect x="1458" y="616" width="17" height="48" fill="#ff0000"/>
<rect x="1458" y="616" width="2" height="48" fill="#ff3a3a"/>
<rect x="1473" y="616" width="2" height="48" fill="#a80000"/>
<rect x="1480" y="611" width="18" height="53" fill="#ff0000"/>
<rect x="1480" y="611" width="2" height="53" fill="#ff3a3a"/>
<rect x="1496" y="611" width="2" height="53" fill="#a80000"/>
<rect x="1502" y="619" width="18" height="45" fill="#ff0000"/>
<rect x="1502" y="619" width="2" height="45" fill="#ff3a3a"/>
<rect x="1518" y="619" width="2" height="45" fill="#a80000"/>
<rect x="1525" y="628" width="18" height="36" fill="#ff0000"/>
<rect x="1525" y="628" width="2" height="36" fill="#ff3a3a"/>
<rect x="1541" y="628" width="2" height="36" fill="#a80000"/>
<rect x="1547" y="631" width="18" height="33" fill="#ff0000"/>
<rect x="1547" y="631" width="2" height="33" fill="#ff3a3a"/>
<rect x="1563" y="631" width="2" height="33" fill="#a80000"/>
<rect x="1570" y="632" width="18" height="32" fill="#ff0000"/>
<rect x="1570" y="632" width="2" height="32" fill="#ff3a3a"/>
<rect x="1586" y="632" width="2" height="32" fill="#a80000"/>
<rect x="1592" y="623" width="18" height="41" fill="#ff0000"/>
<rect x="1592" y="623" width="2" height="41" fill="#ff3a3a"/>
<rect x="1608" y="623" width="2" height="41" fill="#a80000"/>
<rect x="1615" y="610" width="18" height="54" fill="#ff0000"/>
<rect x="1615" y="610" width="2" height="54" fill="#ff3a3a"/>
<rect x="1631" y="610" width="2" height="54" fill="#a80000"/>
<rect x="1637" y="615" width="18" height="49" fill="#ff0000"/>
<rect x="1637" y="615" width="2" height="49" fill="#ff3a3a"/>
<rect x="1653" y="615" width="2" height="49" fill="#a80000"/>
<rect x="1660" y="600" width="18" height="64" fill="#ff0000"/>
<rect x="1660" y="600" width="2" height="64" fill="#ff3a3a"/>
<rect x="1676" y="600" width="2" height="64" fill="#a80000"/>
<rect x="1682" y="440" width="18" height="224" fill="#ff0000"/>
<rect x="1682" y="440" width="2" height="224" fill="#ff3a3a"/>
<rect x="1698" y="440" width="2" height="224" fill="#a80000"/>
<rect x="1705" y="533" width="18" height="131" fill="#ff0000"/>
<rect x="1705" y="533" width="2" height="131" fill="#ff3a3a"/>
<rect x="1721" y="533" width="2" height="131" fill="#a80000"/>
<rect x="1727" y="587" width="18" height="77" fill="#ff0000"/>
<rect x="1727" y="587" width="2" height="77" fill="#ff3a3a"/>
<rect x="1743" y="587" width="2" height="77" fill="#a80000"/>
<rect x="1750" y="606" width="18" height="58" fill="#ff0000"/>
<rect x="1750" y="606" width="2" height="58" fill="#ff3a3a"/>
<rect x="1766" y="606" width="2" height="58" fill="#a80000"/>
<rect x="1772" y="615" width="18" height="49" fill="#ff0000"/>
<rect x="1772" y="615" width="2" height="49" fill="#ff3a3a"/>
<rect x="1788" y="615" width="2" height="49" fill="#a80000"/>
<rect x="1795" y="618" width="18" height="46" fill="#ff0000"/>
<rect x="1795" y="618" width="2" height="46" fill="#ff3a3a"/>
<rect x="1811" y="618" width="2" height="46" fill="#a80000"/>
<rect x="1051" y="429" width="765" height="1" fill="#000"/>
<rect x="1051" y="664" width="765" height="1" fill="#000"/>
<rect x="1051" y="429" width="1" height="236" fill="#000"/>
<rect x="1815" y="429" width="1" height="236" fill="#000"/>
<rect x="1051" y="664" width="24" height="1" fill="#000"/>
<text x="1045.4" y="667.5" font-size="10" font-weight="normal" fill="#000" text-anchor="end">0</text>
<rect x="1051" y="659" width="12" height="1" fill="#000"/>
<rect x="1051" y="654" width="12" height="1" fill="#000"/>
<rect x="1051" y="649" width="12" height="1" fill="#000"/>
<rect x="1051" y="644" width="24" height="1" fill="#000"/>
<text x="1045.4" y="647.5" font-size="10" font-weight="normal" fill="#000" text-anchor="end">200</text>
<rect x="1051" y="640" width="12" height="1" fill="#000"/>
<rect x="1051" y="635" width="12" height="1" fill="#000"/>
<rect x="1051" y="630" width="12" height="1" fill="#000"/>
<rect x="1051" y="625" width="24" height="1" fill="#000"/>
<text x="1045.4" y="628.5" font-size="10" font-weight="normal" fill="#000" text-anchor="end">400</text>
<rect x="1051" y="620" width="12" height="1" fill="#000"/>
<rect x="1051" y="615" width="12" height="1" fill="#000"/>
<rect x="1051" y="610" width="12" height="1" fill="#000"/>
<rect x="1051" y="605" width="24" height="1" fill="#000"/>
<text x="1045.4" y="608.5" font-size="10" font-weight="normal" fill="#000" text-anchor="end">600</text>
<rect x="1051" y="600" width="12" height="1" fill="#000"/>
<rect x="1051" y="596" width="12" height="1" fill="#000"/>
<rect x="1051" y="591" width="12" height="1" fill="#000"/>
<rect x="1051" y="586" width="24" height="1" fill="#000"/>
<text x="1045.4" y="589.5" font-size="10" font-weight="normal" fill="#000" text-anchor="end">800</text>
<rect x="1051" y="581" width="12" height="1" fill="#000"/>
<rect x="1051" y="576" width="12" height="1" fill="#000"/>
<rect x="1051" y="571" width="12" height="1" fill="#000"/>
<rect x="1051" y="566" width="24" height="1" fill="#000"/>
<text x="1045.4" y="569.5" font-size="10" font-weight="normal" fill="#000" text-anchor="end">1000</text>
<rect x="1051" y="561" width="12" height="1" fill="#000"/>
<rect x="1051" y="557" width="12" height="1" fill="#000"/>
<rect x="1051" y="552" width="12" height="1" fill="#000"/>
<rect x="1051" y="547" width="24" height="1" fill="#000"/>
<text x="1045.4" y="550.5" font-size="10" font-weight="normal" fill="#000" text-anchor="end">1200</text>
<rect x="1051" y="542" width="12" height="1" fill="#000"/>
<rect x="1051" y="537" width="12" height="1" fill="#000"/>
<rect x="1051" y="532" width="12" height="1" fill="#000"/>
<rect x="1051" y="527" width="24" height="1" fill="#000"/>
<text x="1045.4" y="530.5" font-size="10" font-weight="normal" fill="#000" text-anchor="end">1400</text>
<rect x="1051" y="522" width="12" height="1" fill="#000"/>
<rect x="1051" y="517" width="12" height="1" fill="#000"/>
<rect x="1051" y="513" width="12" height="1" fill="#000"/>
<rect x="1051" y="508" width="24" height="1" fill="#000"/>
<text x="1045.4" y="511.5" font-size="10" font-weight="normal" fill="#000" text-anchor="end">1600</text>
<rect x="1051" y="503" width="12" height="1" fill="#000"/>
<rect x="1051" y="498" width="12" height="1" fill="#000"/>
<rect x="1051" y="493" width="12" height="1" fill="#000"/>
<rect x="1051" y="488" width="24" height="1" fill="#000"/>
<text x="1045.4" y="491.5" font-size="10" font-weight="normal" fill="#000" text-anchor="end">1800</text>
<rect x="1051" y="483" width="12" height="1" fill="#000"/>
<rect x="1051" y="478" width="12" height="1" fill="#000"/>
<rect x="1051" y="473" width="12" height="1" fill="#000"/>
<rect x="1051" y="469" width="24" height="1" fill="#000"/>
<text x="1045.4" y="472.5" font-size="10" font-weight="normal" fill="#000" text-anchor="end">2000</text>
<rect x="1051" y="464" width="12" height="1" fill="#000"/>
<rect x="1051" y="459" width="12" height="1" fill="#000"/>
<rect x="1051" y="454" width="12" height="1" fill="#000"/>
<rect x="1051" y="449" width="24" height="1" fill="#000"/>
<text x="1045.4" y="452.5" font-size="10" font-weight="normal" fill="#000" text-anchor="end">2200</text>
<rect x="1051" y="444" width="12" height="1" fill="#000"/>
<rect x="1051" y="439" width="12" height="1" fill="#000"/>
<rect x="1051" y="434" width="12" height="1" fill="#000"/>
<rect x="1051" y="430" width="24" height="1" fill="#000"/>
<text x="1045.4" y="433.5" font-size="10" font-weight="normal" fill="#000" text-anchor="end">2400</text>
<rect x="1073" y="657" width="1" height="8" fill="#000"/>
<rect x="1096" y="657" width="1" height="8" fill="#000"/>
<rect x="1118" y="657" width="1" height="8" fill="#000"/>
<rect x="1141" y="657" width="1" height="8" fill="#000"/>
<rect x="1163" y="657" width="1" height="8" fill="#000"/>
<rect x="1186" y="657" width="1" height="8" fill="#000"/>
<rect x="1208" y="657" width="1" height="8" fill="#000"/>
<rect x="1231" y="657" width="1" height="8" fill="#000"/>
<rect x="1253" y="657" width="1" height="8" fill="#000"/>
<rect x="1276" y="657" width="1" height="8" fill="#000"/>
<rect x="1298" y="657" width="1" height="8" fill="#000"/>
<rect x="1321" y="657" width="1" height="8" fill="#000"/>
<rect x="1343" y="657" width="1" height="8" fill="#000"/>
<rect x="1366" y="657" width="1" height="8" fill="#000"/>
<rect x="1388" y="657" width="1" height="8" fill="#000"/>
<rect x="1411" y="657" width="1" height="8" fill="#000"/>
<rect x="1433" y="657" width="1" height="8" fill="#000"/>
<rect x="1455" y="657" width="1" height="8" fill="#000"/>
<rect x="1478" y="657" width="1" height="8" fill="#000"/>
<rect x="1500" y="657" width="1" height="8" fill="#000"/>
<rect x="1523" y="657" width="1" height="8" fill="#000"/>
<rect x="1545" y="657" width="1" height="8" fill="#000"/>
<rect x="1568" y="657" width="1" height="8" fill="#000"/>
<rect x="1590" y="657" width="1" height="8" fill="#000"/>
<rect x="1613" y="657" width="1" height="8" fill="#000"/>
<rect x="1635" y="657" width="1" height="8" fill="#000"/>
<rect x="1658" y="657" width="1" height="8" fill="#000"/>
<rect x="1680" y="657" width="1" height="8" fill="#000"/>
<rect x="1703" y="657" width="1" height="8" fill="#000"/>
<rect x="1725" y="657" width="1" height="8" fill="#000"/>
<rect x="1748" y="657" width="1" height="8" fill="#000"/>
<rect x="1770" y="657" width="1" height="8" fill="#000"/>
<rect x="1793" y="657" width="1" height="8" fill="#000"/>
<text transform="translate(1060.24,669.40) rotate(19)" font-size="6" fill="#000" stroke="#000" stroke-width="0.12">PARIS_BR1D1</text>
<text transform="translate(1082.71,669.40) rotate(19)" font-size="6" fill="#000" stroke="#000" stroke-width="0.12">PARIS_BR1D2</text>
<text transform="translate(1105.18,669.40) rotate(19)" font-size="6" fill="#000" stroke="#000" stroke-width="0.12">PARIS_BR1D3</text>
<text transform="translate(1127.65,669.40) rotate(19)" font-size="6" fill="#000" stroke="#000" stroke-width="0.12">PARIS_BR1D4</text>
<text transform="translate(1150.12,669.40) rotate(19)" font-size="6" fill="#000" stroke="#000" stroke-width="0.12">PARIS_BR1D5</text>
<text transform="translate(1172.59,669.40) rotate(19)" font-size="6" fill="#000" stroke="#000" stroke-width="0.12">PARIS_BR1D6</text>
<text transform="translate(1195.06,669.40) rotate(19)" font-size="6" fill="#000" stroke="#000" stroke-width="0.12">PARIS_BR1D7</text>
<text transform="translate(1217.53,669.40) rotate(19)" font-size="6" fill="#000" stroke="#000" stroke-width="0.12">PARIS_BR1D8</text>
<text transform="translate(1240.00,669.40) rotate(19)" font-size="6" fill="#000" stroke="#000" stroke-width="0.12">PARIS_BR2D1</text>
<text transform="translate(1262.47,669.40) rotate(19)" font-size="6" fill="#000" stroke="#000" stroke-width="0.12">PARIS_BR2D2</text>
<text transform="translate(1284.94,669.40) rotate(19)" font-size="6" fill="#000" stroke="#000" stroke-width="0.12">PARIS_BR2D3</text>
<text transform="translate(1307.41,669.40) rotate(19)" font-size="6" fill="#000" stroke="#000" stroke-width="0.12">PARIS_BR2D4</text>
<text transform="translate(1329.88,669.40) rotate(19)" font-size="6" fill="#000" stroke="#000" stroke-width="0.12">PARIS_BR2D5</text>
<text transform="translate(1352.35,669.40) rotate(19)" font-size="6" fill="#000" stroke="#000" stroke-width="0.12">PARIS_BR2D6</text>
<text transform="translate(1374.82,669.40) rotate(19)" font-size="6" fill="#000" stroke="#000" stroke-width="0.12">PARIS_BR2D7</text>
<text transform="translate(1397.29,669.40) rotate(19)" font-size="6" fill="#000" stroke="#000" stroke-width="0.12">PARIS_BR2D9</text>
<text transform="translate(1419.76,669.40) rotate(19)" font-size="6" fill="#000" stroke="#000" stroke-width="0.12">PARIS_BR2D10</text>
<text transform="translate(1442.24,669.40) rotate(19)" font-size="6" fill="#000" stroke="#000" stroke-width="0.12">PARIS_BR2D11</text>
<text transform="translate(1464.71,669.40) rotate(19)" font-size="6" fill="#000" stroke="#000" stroke-width="0.12">PARIS_BR2D12</text>
<text transform="translate(1487.18,669.40) rotate(19)" font-size="6" fill="#000" stroke="#000" stroke-width="0.12">PARIS_BR2D13</text>
<text transform="translate(1509.65,669.40) rotate(19)" font-size="6" fill="#000" stroke="#000" stroke-width="0.12">PARIS_BR2D14</text>
<text transform="translate(1532.12,669.40) rotate(19)" font-size="6" fill="#000" stroke="#000" stroke-width="0.12">PARIS_BR2D15</text>
<text transform="translate(1554.59,669.40) rotate(19)" font-size="6" fill="#000" stroke="#000" stroke-width="0.12">PARIS_BR2D16</text>
<text transform="translate(1577.06,669.40) rotate(19)" font-size="6" fill="#000" stroke="#000" stroke-width="0.12">PARIS_BR3D1</text>
<text transform="translate(1599.53,669.40) rotate(19)" font-size="6" fill="#000" stroke="#000" stroke-width="0.12">PARIS_BR3D2</text>
<text transform="translate(1622.00,669.40) rotate(19)" font-size="6" fill="#000" stroke="#000" stroke-width="0.12">PARIS_BR3D3</text>
<text transform="translate(1644.47,669.40) rotate(19)" font-size="6" fill="#000" stroke="#000" stroke-width="0.12">PARIS_BR3D4</text>
<text transform="translate(1666.94,669.40) rotate(19)" font-size="6" fill="#000" stroke="#000" stroke-width="0.12">PARIS_BR3D5</text>
<text transform="translate(1689.41,669.40) rotate(19)" font-size="6" fill="#000" stroke="#000" stroke-width="0.12">PARIS_BR3D6</text>
<text transform="translate(1711.88,669.40) rotate(19)" font-size="6" fill="#000" stroke="#000" stroke-width="0.12">PARIS_BR3D7</text>
<text transform="translate(1734.35,669.40) rotate(19)" font-size="6" fill="#000" stroke="#000" stroke-width="0.12">PARIS_BR3D9</text>
<text transform="translate(1756.82,669.40) rotate(19)" font-size="6" fill="#000" stroke="#000" stroke-width="0.12">PARIS_BR3D10</text>
<text transform="translate(1779.29,669.40) rotate(19)" font-size="6" fill="#000" stroke="#000" stroke-width="0.12">PARIS_BR3D11</text>
<text transform="translate(1801.76,669.40) rotate(19)" font-size="6" fill="#000" stroke="#000" stroke-width="0.12">PARIS_BR3D12</text>
<text transform="translate(1050.0,439.1) scale(0.9,1)" font-size="16" font-weight="bold" fill="#ff0000">R</text>
<rect x="963" y="404" width="2" height="15" fill="#000"/>
<rect x="963" y="418" width="234" height="1" fill="#000"/>
<rect x="965" y="401" width="236" height="17" fill="#f2f2f2"/>
<rect x="965" y="401" width="236" height="1" fill="#000"/>
<rect x="965" y="417" width="236" height="1" fill="#000"/>
<rect x="965" y="401" width="1" height="17" fill="#000"/>
<rect x="1200" y="401" width="1" height="17" fill="#000"/>
<text x="1082.3" y="412" font-size="13" font-weight="bold" fill="#000" text-anchor="middle">BPARIS_COUNTERS</text>
</g>
<rect x="1700" y="401" width="192" height="48" fill="#f2f2f2"/>
<rect x="1892" y="404" width="1" height="46" fill="#000"/>
<rect x="1703" y="449" width="190" height="1" fill="#000"/>
<rect x="1700" y="401" width="192" height="1" fill="#000"/>
<rect x="1700" y="448" width="192" height="1" fill="#000"/>
<rect x="1700" y="401" width="1" height="48" fill="#000"/>
<rect x="1891" y="401" width="1" height="48" fill="#000"/>
<rect x="1700" y="413" width="192" height="1" fill="#000"/>
<text x="1796" y="410.2" font-size="10" font-weight="bold" fill="#000" text-anchor="middle">BPARIS_COUNTERS_GRAPH</text>
<text x="1709" y="422.6" font-size="10" font-weight="bold" fill="#000" text-anchor="start">Entries</text>
<text x="1881" y="422.6" font-size="10" font-weight="bold" fill="#000" text-anchor="end">646</text>
<text x="1709" y="434.1" font-size="10" font-weight="bold" fill="#000" text-anchor="start">Mean</text>
<text x="1881" y="434.1" font-size="10" font-weight="bold" fill="#000" text-anchor="end">0</text>
<text x="1709" y="445.6" font-size="10" font-weight="bold" fill="#000" text-anchor="start">Std Dev</text>
<text x="1881" y="445.6" font-size="10" font-weight="bold" fill="#000" text-anchor="end">0</text>
<g clip-path="url(#pc4)">
<rect x="96" y="723" width="765" height="1" fill="#000"/>
<rect x="96" y="958" width="765" height="1" fill="#000"/>
<rect x="96" y="723" width="1" height="236" fill="#000"/>
<rect x="860" y="723" width="1" height="236" fill="#000"/>
<rect x="96" y="958" width="24" height="1" fill="#000"/>
<text x="90.4" y="962.3" font-size="10" font-weight="normal" fill="#000" text-anchor="end">0</text>
<rect x="96" y="947" width="12" height="1" fill="#000"/>
<rect x="96" y="936" width="12" height="1" fill="#000"/>
<rect x="96" y="924" width="12" height="1" fill="#000"/>
<rect x="96" y="913" width="24" height="1" fill="#000"/>
<text x="90.4" y="917.3" font-size="10" font-weight="normal" fill="#000" text-anchor="end">0.2</text>
<rect x="96" y="902" width="12" height="1" fill="#000"/>
<rect x="96" y="891" width="12" height="1" fill="#000"/>
<rect x="96" y="880" width="12" height="1" fill="#000"/>
<rect x="96" y="868" width="24" height="1" fill="#000"/>
<text x="90.4" y="872.3" font-size="10" font-weight="normal" fill="#000" text-anchor="end">0.4</text>
<rect x="96" y="857" width="12" height="1" fill="#000"/>
<rect x="96" y="846" width="12" height="1" fill="#000"/>
<rect x="96" y="835" width="12" height="1" fill="#000"/>
<rect x="96" y="824" width="24" height="1" fill="#000"/>
<text x="90.4" y="828.3" font-size="10" font-weight="normal" fill="#000" text-anchor="end">0.6</text>
<rect x="96" y="812" width="12" height="1" fill="#000"/>
<rect x="96" y="801" width="12" height="1" fill="#000"/>
<rect x="96" y="790" width="12" height="1" fill="#000"/>
<rect x="96" y="779" width="24" height="1" fill="#000"/>
<text x="90.4" y="783.3" font-size="10" font-weight="normal" fill="#000" text-anchor="end">0.8</text>
<rect x="96" y="768" width="12" height="1" fill="#000"/>
<rect x="96" y="756" width="12" height="1" fill="#000"/>
<rect x="96" y="745" width="12" height="1" fill="#000"/>
<rect x="96" y="734" width="24" height="1" fill="#000"/>
<text x="90.4" y="738.3" font-size="10" font-weight="normal" fill="#000" text-anchor="end">1</text>
<rect x="96" y="723" width="12" height="1" fill="#000"/>
<rect x="122" y="951" width="1" height="8" fill="#000"/>
<rect x="149" y="951" width="1" height="8" fill="#000"/>
<rect x="175" y="951" width="1" height="8" fill="#000"/>
<rect x="201" y="951" width="1" height="8" fill="#000"/>
<rect x="228" y="951" width="1" height="8" fill="#000"/>
<rect x="254" y="951" width="1" height="8" fill="#000"/>
<rect x="280" y="951" width="1" height="8" fill="#000"/>
<rect x="307" y="951" width="1" height="8" fill="#000"/>
<rect x="333" y="951" width="1" height="8" fill="#000"/>
<rect x="359" y="951" width="1" height="8" fill="#000"/>
<rect x="386" y="951" width="1" height="8" fill="#000"/>
<rect x="412" y="951" width="1" height="8" fill="#000"/>
<rect x="438" y="951" width="1" height="8" fill="#000"/>
<rect x="465" y="951" width="1" height="8" fill="#000"/>
<rect x="491" y="951" width="1" height="8" fill="#000"/>
<rect x="518" y="951" width="1" height="8" fill="#000"/>
<rect x="544" y="951" width="1" height="8" fill="#000"/>
<rect x="570" y="951" width="1" height="8" fill="#000"/>
<rect x="597" y="951" width="1" height="8" fill="#000"/>
<rect x="623" y="951" width="1" height="8" fill="#000"/>
<rect x="649" y="951" width="1" height="8" fill="#000"/>
<rect x="676" y="951" width="1" height="8" fill="#000"/>
<rect x="702" y="951" width="1" height="8" fill="#000"/>
<rect x="728" y="951" width="1" height="8" fill="#000"/>
<rect x="755" y="951" width="1" height="8" fill="#000"/>
<rect x="781" y="951" width="1" height="8" fill="#000"/>
<rect x="807" y="951" width="1" height="8" fill="#000"/>
<rect x="834" y="951" width="1" height="8" fill="#000"/>
<text transform="translate(107.17,963.40) rotate(19)" font-size="6" fill="#000" stroke="#000" stroke-width="0.12">S1_0_DSSD</text>
<text transform="translate(133.52,963.40) rotate(19)" font-size="6" fill="#000" stroke="#000" stroke-width="0.12">S1_1_DSSD</text>
<text transform="translate(159.86,963.40) rotate(19)" font-size="6" fill="#000" stroke="#000" stroke-width="0.12">S1_2_DSSD</text>
<text transform="translate(186.21,963.40) rotate(19)" font-size="6" fill="#000" stroke="#000" stroke-width="0.12">S1_4_DSSD</text>
<text transform="translate(212.55,963.40) rotate(19)" font-size="6" fill="#000" stroke="#000" stroke-width="0.12">S1_5_DSSD</text>
<text transform="translate(238.90,963.40) rotate(19)" font-size="6" fill="#000" stroke="#000" stroke-width="0.12">S1_6_DSSD</text>
<text transform="translate(265.24,963.40) rotate(19)" font-size="6" fill="#000" stroke="#000" stroke-width="0.12">S1_7_DSSD</text>
<text transform="translate(291.59,963.40) rotate(19)" font-size="6" fill="#000" stroke="#000" stroke-width="0.12">S1_8_DSSD</text>
<text transform="translate(317.93,963.40) rotate(19)" font-size="6" fill="#000" stroke="#000" stroke-width="0.12">S1_9_DSSD</text>
<text transform="translate(344.28,963.40) rotate(19)" font-size="6" fill="#000" stroke="#000" stroke-width="0.12">S1_10_DSSD</text>
<text transform="translate(370.62,963.40) rotate(19)" font-size="6" fill="#000" stroke="#000" stroke-width="0.12">S1_11_DSSD</text>
<text transform="translate(396.97,963.40) rotate(19)" font-size="6" fill="#000" stroke="#000" stroke-width="0.12">S1_12_DSSD</text>
<text transform="translate(423.31,963.40) rotate(19)" font-size="6" fill="#000" stroke="#000" stroke-width="0.12">S1_13_DSSD</text>
<text transform="translate(449.66,963.40) rotate(19)" font-size="6" fill="#000" stroke="#000" stroke-width="0.12">S1_14_DSSD</text>
<text transform="translate(476.00,963.40) rotate(19)" font-size="6" fill="#000" stroke="#000" stroke-width="0.12">S1_15_DSSD</text>
<text transform="translate(502.34,963.40) rotate(19)" font-size="6" fill="#000" stroke="#000" stroke-width="0.12">S2_0_DSSD</text>
<text transform="translate(528.69,963.40) rotate(19)" font-size="6" fill="#000" stroke="#000" stroke-width="0.12">S2_1_DSSD</text>
<text transform="translate(555.03,963.40) rotate(19)" font-size="6" fill="#000" stroke="#000" stroke-width="0.12">S2_2_DSSD</text>
<text transform="translate(581.38,963.40) rotate(19)" font-size="6" fill="#000" stroke="#000" stroke-width="0.12">S2_3_DSSD</text>
<text transform="translate(607.72,963.40) rotate(19)" font-size="6" fill="#000" stroke="#000" stroke-width="0.12">S2_4_DSSD</text>
<text transform="translate(634.07,963.40) rotate(19)" font-size="6" fill="#000" stroke="#000" stroke-width="0.12">S2_5_DSSD</text>
<text transform="translate(660.41,963.40) rotate(19)" font-size="6" fill="#000" stroke="#000" stroke-width="0.12">S2_6_DSSD</text>
<text transform="translate(686.76,963.40) rotate(19)" font-size="6" fill="#000" stroke="#000" stroke-width="0.12">S2_7_DSSD</text>
<text transform="translate(713.10,963.40) rotate(19)" font-size="6" fill="#000" stroke="#000" stroke-width="0.12">S2_8_DSSD</text>
<text transform="translate(739.45,963.40) rotate(19)" font-size="6" fill="#000" stroke="#000" stroke-width="0.12">S2_11_DSSD</text>
<text transform="translate(765.79,963.40) rotate(19)" font-size="6" fill="#000" stroke="#000" stroke-width="0.12">S2_12_DSSD</text>
<text transform="translate(792.14,963.40) rotate(19)" font-size="6" fill="#000" stroke="#000" stroke-width="0.12">S2_13_DSSD</text>
<text transform="translate(818.48,963.40) rotate(19)" font-size="6" fill="#000" stroke="#000" stroke-width="0.12">S2_14_DSSD</text>
<text transform="translate(844.83,963.40) rotate(19)" font-size="6" fill="#000" stroke="#000" stroke-width="0.12">S2_15_DSSD</text>
<text transform="translate(95.0,733.1) scale(0.9,1)" font-size="16" font-weight="bold" fill="#ff0000">R</text>
<rect x="8" y="698" width="2" height="15" fill="#000"/>
<rect x="8" y="712" width="239" height="1" fill="#000"/>
<rect x="10" y="695" width="241" height="17" fill="#f2f2f2"/>
<rect x="10" y="695" width="241" height="1" fill="#000"/>
<rect x="10" y="711" width="241" height="1" fill="#000"/>
<rect x="10" y="695" width="1" height="17" fill="#000"/>
<rect x="250" y="695" width="1" height="17" fill="#000"/>
<text x="129.8" y="707" font-size="13" font-weight="bold" fill="#000" text-anchor="middle">S_DSSD_COUNTERS</text>
</g>
<rect x="745" y="695" width="192" height="48" fill="#f2f2f2"/>
<rect x="937" y="698" width="1" height="46" fill="#000"/>
<rect x="748" y="743" width="190" height="1" fill="#000"/>
<rect x="745" y="695" width="192" height="1" fill="#000"/>
<rect x="745" y="742" width="192" height="1" fill="#000"/>
<rect x="745" y="695" width="1" height="48" fill="#000"/>
<rect x="936" y="695" width="1" height="48" fill="#000"/>
<rect x="745" y="707" width="192" height="1" fill="#000"/>
<text x="841" y="705" font-size="10" font-weight="bold" fill="#000" text-anchor="middle">S_DSSD_COUNTERS_GRAPH</text>
<text x="754" y="716.6" font-size="10" font-weight="bold" fill="#000" text-anchor="start">Entries</text>
<text x="926" y="716.6" font-size="10" font-weight="bold" fill="#000" text-anchor="end">0</text>
<text x="754" y="728.1" font-size="10" font-weight="bold" fill="#000" text-anchor="start">Mean</text>
<text x="926" y="728.1" font-size="10" font-weight="bold" fill="#000" text-anchor="end">0</text>
<text x="754" y="739.6" font-size="10" font-weight="bold" fill="#000" text-anchor="start">Std Dev</text>
<text x="926" y="739.6" font-size="10" font-weight="bold" fill="#000" text-anchor="end">0</text>
<g clip-path="url(#pc5)">
<rect x="1051" y="723" width="765" height="1" fill="#000"/>
<rect x="1051" y="958" width="765" height="1" fill="#000"/>
<rect x="1051" y="723" width="1" height="236" fill="#000"/>
<rect x="1815" y="723" width="1" height="236" fill="#000"/>
<rect x="1051" y="958" width="24" height="1" fill="#000"/>
<text x="1045.4" y="962.3" font-size="10" font-weight="normal" fill="#000" text-anchor="end">0</text>
<rect x="1051" y="947" width="12" height="1" fill="#000"/>
<rect x="1051" y="936" width="12" height="1" fill="#000"/>
<rect x="1051" y="924" width="12" height="1" fill="#000"/>
<rect x="1051" y="913" width="24" height="1" fill="#000"/>
<text x="1045.4" y="917.3" font-size="10" font-weight="normal" fill="#000" text-anchor="end">0.2</text>
<rect x="1051" y="902" width="12" height="1" fill="#000"/>
<rect x="1051" y="891" width="12" height="1" fill="#000"/>
<rect x="1051" y="880" width="12" height="1" fill="#000"/>
<rect x="1051" y="868" width="24" height="1" fill="#000"/>
<text x="1045.4" y="872.3" font-size="10" font-weight="normal" fill="#000" text-anchor="end">0.4</text>
<rect x="1051" y="857" width="12" height="1" fill="#000"/>
<rect x="1051" y="846" width="12" height="1" fill="#000"/>
<rect x="1051" y="835" width="12" height="1" fill="#000"/>
<rect x="1051" y="824" width="24" height="1" fill="#000"/>
<text x="1045.4" y="828.3" font-size="10" font-weight="normal" fill="#000" text-anchor="end">0.6</text>
<rect x="1051" y="812" width="12" height="1" fill="#000"/>
<rect x="1051" y="801" width="12" height="1" fill="#000"/>
<rect x="1051" y="790" width="12" height="1" fill="#000"/>
<rect x="1051" y="779" width="24" height="1" fill="#000"/>
<text x="1045.4" y="783.3" font-size="10" font-weight="normal" fill="#000" text-anchor="end">0.8</text>
<rect x="1051" y="768" width="12" height="1" fill="#000"/>
<rect x="1051" y="756" width="12" height="1" fill="#000"/>
<rect x="1051" y="745" width="12" height="1" fill="#000"/>
<rect x="1051" y="734" width="24" height="1" fill="#000"/>
<text x="1045.4" y="738.3" font-size="10" font-weight="normal" fill="#000" text-anchor="end">1</text>
<rect x="1051" y="723" width="12" height="1" fill="#000"/>
<rect x="1106" y="951" width="1" height="8" fill="#000"/>
<rect x="1160" y="951" width="1" height="8" fill="#000"/>
<rect x="1215" y="951" width="1" height="8" fill="#000"/>
<rect x="1269" y="951" width="1" height="8" fill="#000"/>
<rect x="1324" y="951" width="1" height="8" fill="#000"/>
<rect x="1378" y="951" width="1" height="8" fill="#000"/>
<rect x="1433" y="951" width="1" height="8" fill="#000"/>
<rect x="1488" y="951" width="1" height="8" fill="#000"/>
<rect x="1542" y="951" width="1" height="8" fill="#000"/>
<rect x="1597" y="951" width="1" height="8" fill="#000"/>
<rect x="1651" y="951" width="1" height="8" fill="#000"/>
<rect x="1706" y="951" width="1" height="8" fill="#000"/>
<rect x="1760" y="951" width="1" height="8" fill="#000"/>
<text x="1076.99" y="967" font-size="6.2" font-weight="normal" fill="#000" text-anchor="middle">R_0_DSSD</text>
<text x="1131.56" y="967" font-size="6.2" font-weight="normal" fill="#000" text-anchor="middle">R_1_DSSD</text>
<text x="1186.13" y="967" font-size="6.2" font-weight="normal" fill="#000" text-anchor="middle">R_2_DSSD</text>
<text x="1240.7" y="967" font-size="6.2" font-weight="normal" fill="#000" text-anchor="middle">R_3_DSSD</text>
<text x="1295.27" y="967" font-size="6.2" font-weight="normal" fill="#000" text-anchor="middle">R_5_DSSD</text>
<text x="1349.84" y="967" font-size="6.2" font-weight="normal" fill="#000" text-anchor="middle">R_6_DSSD</text>
<text x="1404.41" y="967" font-size="6.2" font-weight="normal" fill="#000" text-anchor="middle">R_7_DSSD</text>
<text x="1458.99" y="967" font-size="6.2" font-weight="normal" fill="#000" text-anchor="middle">R_8_DSSD</text>
<text x="1513.56" y="967" font-size="6.2" font-weight="normal" fill="#000" text-anchor="middle">R_9_DSSD</text>
<text x="1568.13" y="967" font-size="6.2" font-weight="normal" fill="#000" text-anchor="middle">R_10_DSSD</text>
<text x="1622.7" y="967" font-size="6.2" font-weight="normal" fill="#000" text-anchor="middle">R_11_DSSD</text>
<text x="1677.27" y="967" font-size="6.2" font-weight="normal" fill="#000" text-anchor="middle">R_12_DSSD</text>
<text x="1731.84" y="967" font-size="6.2" font-weight="normal" fill="#000" text-anchor="middle">R_13_DSSD</text>
<text x="1786.41" y="967" font-size="6.2" font-weight="normal" fill="#000" text-anchor="middle">R_14_DSSD</text>
<text transform="translate(1050.0,733.1) scale(0.9,1)" font-size="16" font-weight="bold" fill="#ff0000">R</text>
<rect x="963" y="698" width="2" height="15" fill="#000"/>
<rect x="963" y="712" width="239" height="1" fill="#000"/>
<rect x="965" y="695" width="241" height="17" fill="#f2f2f2"/>
<rect x="965" y="695" width="241" height="1" fill="#000"/>
<rect x="965" y="711" width="241" height="1" fill="#000"/>
<rect x="965" y="695" width="1" height="17" fill="#000"/>
<rect x="1205" y="695" width="1" height="17" fill="#000"/>
<text x="1084.8" y="707" font-size="13" font-weight="bold" fill="#000" text-anchor="middle">R_DSSD_COUNTERS</text>
</g>
<rect x="1700" y="695" width="192" height="48" fill="#f2f2f2"/>
<rect x="1892" y="698" width="1" height="46" fill="#000"/>
<rect x="1703" y="743" width="190" height="1" fill="#000"/>
<rect x="1700" y="695" width="192" height="1" fill="#000"/>
<rect x="1700" y="742" width="192" height="1" fill="#000"/>
<rect x="1700" y="695" width="1" height="48" fill="#000"/>
<rect x="1891" y="695" width="1" height="48" fill="#000"/>
<rect x="1700" y="707" width="192" height="1" fill="#000"/>
<text x="1796" y="705" font-size="10" font-weight="bold" fill="#000" text-anchor="middle">R_DSSD_COUNTERS_GRAPH</text>
<text x="1709" y="716.6" font-size="10" font-weight="bold" fill="#000" text-anchor="start">Entries</text>
<text x="1881" y="716.6" font-size="10" font-weight="bold" fill="#000" text-anchor="end">0</text>
<text x="1709" y="728.1" font-size="10" font-weight="bold" fill="#000" text-anchor="start">Mean</text>
<text x="1881" y="728.1" font-size="10" font-weight="bold" fill="#000" text-anchor="end">0</text>
<text x="1709" y="739.6" font-size="10" font-weight="bold" fill="#000" text-anchor="start">Std Dev</text>
<text x="1881" y="739.6" font-size="10" font-weight="bold" fill="#000" text-anchor="end">0</text>
</svg></body></html>
